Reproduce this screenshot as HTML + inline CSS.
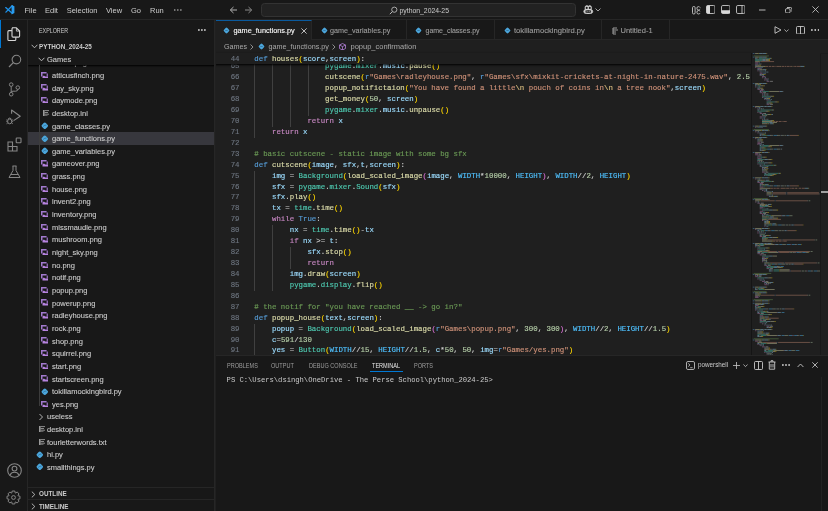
<!DOCTYPE html>
<html><head><meta charset="utf-8">
<style>
*{box-sizing:border-box;margin:0;padding:0}
html,body{width:828px;height:511px;overflow:hidden;background:#181818;font-family:"Liberation Sans",sans-serif;color:#cccccc}
.abs{position:absolute}
/* title bar */
#title{position:absolute;left:0;top:0;width:828px;height:19.5px;background:#181818;border-bottom:1px solid #262626}
.menu{position:absolute;top:5.7px;font-size:7.5px;line-height:9px;color:#cccccc;white-space:nowrap}
#cmd{position:absolute;left:260.5px;top:3px;width:315px;height:14px;background:#222222;border:1px solid #333333;border-radius:3.5px}
/* activity bar */
#act{position:absolute;left:0;top:19.5px;width:27.5px;height:492px;background:#181818;border-right:1px solid #262626}
#act svg{position:absolute}
/* sidebar */
#side{position:absolute;left:27.5px;top:19.5px;width:187px;height:492px;background:#181818;border-right:1px solid #262626;overflow:hidden}
.row{position:absolute;left:0;-webkit-text-stroke:0.1px currentColor;width:187px;height:12.65px;font-size:7.5px;line-height:12.65px;color:#cccccc;white-space:nowrap}
.row.sel{background:#37373d}
.row .ico{position:absolute;top:0;height:12.65px;display:flex;align-items:center}
.row .rt{position:absolute;top:1.3px}
/* editor */
#editor{position:absolute;left:215px;top:19.5px;width:613px;height:336px;background:#1f1f1f;overflow:hidden}
#tabs{position:absolute;left:0;top:0;width:613px;height:20px;background:#181818;border-bottom:1px solid #262626}
.tab{position:absolute;-webkit-text-stroke:0.1px currentColor;top:0;height:19px;border-right:1px solid #262626;font-size:7.5px;line-height:20px;color:#9d9d9d;white-space:nowrap;background:#181818}
.tab.active{background:#1f1f1f;color:#ffffff;border-top:1px solid #0a5a9e;border-bottom:none;height:20.5px}
.tab svg{position:absolute}
.tab.in > span{top:1px !important}
.tab.in > svg{margin-top:1px}
.ln{position:absolute;left:0;-webkit-text-stroke:0.12px currentColor;width:24.5px;text-align:right;font-family:"Liberation Mono",monospace;font-size:7.39px;line-height:10.925px;height:10.925px;color:#6e7681;white-space:pre}
.cl{position:absolute;left:39.3px;-webkit-text-stroke:0.15px currentColor;font-family:"Liberation Mono",monospace;font-size:7.39px;line-height:10.925px;height:10.925px;white-space:pre;color:#cccccc}
.ig{position:absolute;width:1px;background:#404040}
/* panel */
#panel{position:absolute;left:215px;top:354.7px;width:613px;height:156px;background:#181818;border-top:1px solid #262626}
.ptab{position:absolute;top:6.4px;font-size:6.4px;line-height:8px;color:#9d9d9d;white-space:nowrap;transform:scaleX(0.87);transform-origin:0 0}
</style></head>
<body><div id="wrap" style="position:absolute;left:0;top:0;width:828px;height:511px;will-change:transform;overflow:hidden">
<div id="title">
  <svg class="abs" style="left:0;top:0" width="20" height="19" viewBox="0 0 20 19"><path d="M5.7 7.6 L12.2 13.2 M5.9 12.1 L12.2 5.7" stroke="#1e92ea" stroke-width="1.35" stroke-linecap="round"/><path d="M11.6 5 L14.4 6.3 V13.1 L11.6 14.4 Z" fill="#2a9df0"/></svg>
  <span class="menu" style="left:24.5px">File</span>
  <span class="menu" style="left:45px">Edit</span>
  <span class="menu" style="left:66.7px">Selection</span>
  <span class="menu" style="left:106px">View</span>
  <span class="menu" style="left:131px">Go</span>
  <span class="menu" style="left:150px">Run</span>

  <svg class="abs" style="left:228.5px;top:6px" width="9" height="8" viewBox="0 0 9 8"><path d="M8 4 H1.5 M4.5 1 L1.3 4 L4.5 7" stroke="#b0b0b0" stroke-width="1" fill="none"/></svg>
  <svg class="abs" style="left:243.5px;top:6px" width="9" height="8" viewBox="0 0 9 8"><path d="M1 4 H7.5 M4.5 1 L7.7 4 L4.5 7" stroke="#8a8a8a" stroke-width="1" fill="none"/></svg>
  <div id="cmd"></div>
  <svg class="abs" style="left:388.5px;top:5.5px" width="9" height="9" viewBox="0 0 9 9"><circle cx="5.3" cy="3.7" r="2.6" stroke="#b8b8b8" stroke-width="0.9" fill="none"/><path d="M3.4 5.6 L0.8 8.2" stroke="#b8b8b8" stroke-width="1"/></svg>
  <span class="menu" style="left:399.5px;top:5.6px;font-size:6.85px">python_2024-25</span>
  <svg class="abs" style="left:583px;top:4.5px" width="10.5" height="9.6" viewBox="0 0 10.5 9.6"><path d="M2 2.2 Q2.3 0.6 3.8 0.6 Q5 0.6 5.25 1.6 Q5.5 0.6 6.7 0.6 Q8.2 0.6 8.5 2.2 Q8.6 3.6 8.3 4.4 Q9.8 5 9.8 6.6 Q9.8 9 5.25 9 Q0.7 9 0.7 6.6 Q0.7 5 2.2 4.4 Q1.9 3.6 2 2.2 Z" fill="#d0d0d0" stroke="#d8d8d8" stroke-width="0.6"/><circle cx="3.7" cy="2.9" r="1.05" fill="#181818"/><circle cx="6.8" cy="2.9" r="1.05" fill="#181818"/><path d="M2.4 5.6 Q5.25 4.4 8.1 5.6 V7.4 Q5.25 8.4 2.4 7.4 Z" fill="#3a3a3a"/><path d="M4.2 6 V7.2 M6.3 6 V7.2" stroke="#9a9a9a" stroke-width="0.7"/></svg>
  <svg class="abs" style="left:595px;top:8px" width="6" height="4" viewBox="0 0 6 4"><path d="M0.5 0.5 L3 3 L5.5 0.5" stroke="#b0b0b0" stroke-width="0.9" fill="none"/></svg>
  <!-- layout icons -->
  <svg class="abs" style="left:691.5px;top:5.5px" width="9" height="9" viewBox="0 0 9 9"><rect x="0.5" y="0.5" width="2.6" height="7.5" rx="1.2" fill="none" stroke="#c8c8c8" stroke-width="0.9"/><path d="M8.2 1.6 Q7.6 0.6 6.4 0.6 Q4.9 0.6 4.9 2.3 Q4.9 4 6.4 4 Q7.6 4 8.2 3.1 M8.2 5.4 Q7.6 4.5 6.4 4.5 Q4.9 4.5 4.9 6.3 Q4.9 8 6.4 8 Q7.6 8 8.2 7" fill="none" stroke="#c8c8c8" stroke-width="0.9"/></svg>
  <svg class="abs" style="left:705.5px;top:5.3px" width="9.5" height="9" viewBox="0 0 9.5 9"><rect x="0.5" y="0.5" width="8.5" height="8" rx="1.3" fill="none" stroke="#c8c8c8" stroke-width="0.9"/><path d="M0.5 1.8 Q0.5 0.5 1.8 0.5 H4 V8.5 H1.8 Q0.5 8.5 0.5 7.2 Z" fill="#d8d8d8"/></svg>
  <svg class="abs" style="left:720.5px;top:5.3px" width="9.5" height="9" viewBox="0 0 9.5 9"><rect x="0.5" y="0.5" width="8.5" height="8" rx="1.3" fill="none" stroke="#c8c8c8" stroke-width="0.9"/><path d="M0.5 5.2 H9 V7.2 Q9 8.5 7.7 8.5 H1.8 Q0.5 8.5 0.5 7.2 Z" fill="#d8d8d8"/></svg>
  <svg class="abs" style="left:735.5px;top:5.3px" width="9.5" height="9" viewBox="0 0 9.5 9"><rect x="0.5" y="0.5" width="8.5" height="8" rx="1.3" fill="none" stroke="#c8c8c8" stroke-width="0.9"/><path d="M6 0.5 V8.5" stroke="#c8c8c8" stroke-width="0.9"/></svg>
  <svg class="abs" style="left:759px;top:9px" width="7" height="2" viewBox="0 0 7 2"><path d="M0 1 H6.5" stroke="#c8c8c8" stroke-width="0.9"/></svg>
  <svg class="abs" style="left:784.7px;top:6.7px" width="7.5" height="6.5" viewBox="0 0 7.5 6.5"><rect x="0.5" y="1.6" width="4.6" height="4.4" rx="1.3" fill="none" stroke="#c8c8c8" stroke-width="0.9"/><path d="M2 0.5 H5.4 Q7 0.5 7 2.1 V4.8" stroke="#c8c8c8" stroke-width="0.9" fill="none"/></svg>
  <svg class="abs" style="left:811.5px;top:6.4px" width="7" height="7" viewBox="0 0 7 7"><path d="M0.4 0.4 L6.6 6.6 M6.6 0.4 L0.4 6.6" stroke="#c8c8c8" stroke-width="0.85"/></svg>
</div>

<div id="act">
  <div class="abs" style="left:0;top:0.6px;width:1.2px;height:27.6px;background:#0078d4"></div>
  <!-- explorer -->
  <svg style="left:7px;top:7.5px" width="14" height="15" viewBox="0 0 14 15"><path d="M5 0.8 H9.3 L12.6 4 V9 Q12.6 10.1 11.5 10.1 H6.1 Q5 10.1 5 9 V1.9 Q5 0.8 6.1 0.8 Z" fill="none" stroke="#d7d7d7" stroke-width="1.1"/><path d="M9.4 1 V4.1 H12.4" fill="none" stroke="#d7d7d7" stroke-width="0.8"/><path d="M4.9 3.6 H2 Q0.9 3.6 0.9 4.7 V12.4 Q0.9 13.5 2 13.5 H7.7 Q8.8 13.5 8.8 12.4 V10.2" fill="none" stroke="#d7d7d7" stroke-width="1.1"/></svg>
  <!-- search -->
  <svg style="left:7.5px;top:34.5px" width="14" height="14" viewBox="0 0 14 14"><circle cx="8.4" cy="5.6" r="4.3" fill="none" stroke="#868686" stroke-width="1.1"/><path d="M5.3 8.7 L1 13" stroke="#868686" stroke-width="1.2"/></svg>
  <!-- source control -->
  <svg style="left:7.5px;top:62px" width="13" height="15" viewBox="0 0 13 15"><circle cx="3.2" cy="2.6" r="1.8" fill="none" stroke="#868686" stroke-width="1"/><circle cx="3.2" cy="12.2" r="1.8" fill="none" stroke="#868686" stroke-width="1"/><circle cx="9.8" cy="5.6" r="1.8" fill="none" stroke="#868686" stroke-width="1"/><path d="M3.2 4.4 V10.4 M9.8 7.4 Q9.8 9.2 7.5 9.2 H5 Q3.2 9.2 3.2 10.4" fill="none" stroke="#868686" stroke-width="1"/></svg>
  <!-- run debug -->
  <svg style="left:6px;top:89.5px" width="15" height="16" viewBox="0 0 15 16"><path d="M5.6 4.8 V1 L14.2 7.3 L7.6 11.6" fill="none" stroke="#868686" stroke-width="1.1" stroke-linejoin="round"/><path d="M2.1 9.8 Q3.7 8.2 5.3 9.8" fill="none" stroke="#868686" stroke-width="0.9"/><rect x="1.7" y="10" width="4" height="4.8" rx="2" fill="none" stroke="#868686" stroke-width="1"/><path d="M0.2 11 H1.7 M0.2 12.6 H1.7 M0.5 14.8 L1.9 13.9 M5.7 11 H7.2 M5.7 12.6 H7.2 M6.9 14.8 L5.5 13.9" stroke="#868686" stroke-width="0.8"/></svg>
  <!-- extensions -->
  <svg style="left:6.5px;top:117px" width="15" height="15" viewBox="0 0 15 15"><path d="M1 5 H5.5 V9.5 H10 V14 H1 Z M1 9.5 H5.5 V14" fill="none" stroke="#868686" stroke-width="1.1"/><rect x="9.2" y="1" width="4.8" height="4.8" rx="0.7" fill="none" stroke="#868686" stroke-width="1.1"/></svg>
  <!-- testing -->
  <svg style="left:7.5px;top:145.5px" width="13" height="14" viewBox="0 0 13 14"><path d="M4.5 1 H8.5 M5 1 V5.5 L1 12.5 H12 L8 5.5 V1 M2.8 9.5 H10.2" fill="none" stroke="#868686" stroke-width="1"/></svg>
  <!-- accounts -->
  <svg style="left:6.5px;top:443.5px" width="15" height="15" viewBox="0 0 15 15"><circle cx="7.5" cy="7.5" r="6.8" fill="none" stroke="#868686" stroke-width="1.1"/><circle cx="7.5" cy="5.6" r="2.4" fill="none" stroke="#868686" stroke-width="1.1"/><path d="M3.2 12.2 Q4 9.3 7.5 9.3 Q11 9.3 11.8 12.2" fill="none" stroke="#868686" stroke-width="1.1"/></svg>
  <!-- manage -->
  <svg style="left:6.3px;top:470.7px" width="15" height="15" viewBox="0 0 15 15"><path d="M12.09 5.77 L13.97 6.19 L13.97 8.81 L12.09 9.23 L11.96 9.52 L13.00 11.15 L11.15 13.00 L9.52 11.96 L9.23 12.09 L8.81 13.97 L6.19 13.97 L5.77 12.09 L5.48 11.96 L3.85 13.00 L2.00 11.15 L3.04 9.52 L2.91 9.23 L1.03 8.81 L1.03 6.19 L2.91 5.77 L3.04 5.48 L2.00 3.85 L3.85 2.00 L5.48 3.04 L5.77 2.91 L6.19 1.03 L8.81 1.03 L9.23 2.91 L9.52 3.04 L11.15 2.00 L13.00 3.85 L11.96 5.48 Z" fill="none" stroke="#868686" stroke-width="1" stroke-linejoin="round"/><circle cx="7.5" cy="7.5" r="1.9" fill="none" stroke="#868686" stroke-width="1"/></svg>
</div>

<div id="side">
  <span class="abs" style="left:11.5px;top:7.5px;font-size:6.3px;line-height:7px;color:#cccccc;transform:scaleX(0.85);transform-origin:0 0">EXPLORER</span>

  <div class="abs" style="left:0;top:33.3px;width:187px;height:433px;overflow:hidden">
    <div class="row" style="top:3.200px"><span class="rt" style="left:24.5px">avatar.png</span></div><div class="row" style="top:15.850px"><span class="ico" style="left:13.6px"><svg width="7.2" height="6.4" viewBox="0 0 7.2 6.4"><path d="M0 0 H5.6 V1.5 H1.5 V4.6 H0 Z" fill="#a27ace"/><path d="M5.6 1.5 H7.2 V4.6 H5.6 Z" fill="#8a64b0"/><path d="M1.5 6.4 V4.6 L2.9 3.6 L4.3 4.6 H7.2 V6.4 Z" fill="#b783e0"/></svg></span><span class="rt" style="left:24.5px">atticusfinch.png</span></div><div class="row" style="top:28.500px"><span class="ico" style="left:13.6px"><svg width="7.2" height="6.4" viewBox="0 0 7.2 6.4"><path d="M0 0 H5.6 V1.5 H1.5 V4.6 H0 Z" fill="#a27ace"/><path d="M5.6 1.5 H7.2 V4.6 H5.6 Z" fill="#8a64b0"/><path d="M1.5 6.4 V4.6 L2.9 3.6 L4.3 4.6 H7.2 V6.4 Z" fill="#b783e0"/></svg></span><span class="rt" style="left:24.5px">day_sky.png</span></div><div class="row" style="top:41.150px"><span class="ico" style="left:13.6px"><svg width="7.2" height="6.4" viewBox="0 0 7.2 6.4"><path d="M0 0 H5.6 V1.5 H1.5 V4.6 H0 Z" fill="#a27ace"/><path d="M5.6 1.5 H7.2 V4.6 H5.6 Z" fill="#8a64b0"/><path d="M1.5 6.4 V4.6 L2.9 3.6 L4.3 4.6 H7.2 V6.4 Z" fill="#b783e0"/></svg></span><span class="rt" style="left:24.5px">daymode.png</span></div><div class="row" style="top:53.800px"><span class="ico" style="left:15.3px"><svg width="6" height="6.5" viewBox="0 0 6 6.5"><rect x="0" y="0" width="1.6" height="6.5" fill="#9a9a9a"/><path d="M1.5 0.6 h4.5 M1.5 2.5 h3.5 M1.5 4.2 h4.5 M1.5 5.9 h3" stroke="#9a9a9a" stroke-width="0.9"/></svg></span><span class="rt" style="left:24.5px">desktop.ini</span></div><div class="row" style="top:66.450px"><span class="ico" style="left:13.5px"><svg width="7.6" height="7.6" viewBox="0 0 7.6 7.6" style="margin-top:0.3px"><rect x="1.1" y="1.1" width="5.4" height="5.4" rx="1.6" transform="rotate(45 3.8 3.8)" fill="#4ba6dc"/><path d="M2.1 4.5 Q3.8 2.8 5.5 3.1" stroke="#2b5f82" stroke-width="0.6" fill="none"/></svg></span><span class="rt" style="left:24.5px">game_classes.py</span></div><div class="row sel" style="top:79.100px"><span class="ico" style="left:13.5px"><svg width="7.6" height="7.6" viewBox="0 0 7.6 7.6" style="margin-top:0.3px"><rect x="1.1" y="1.1" width="5.4" height="5.4" rx="1.6" transform="rotate(45 3.8 3.8)" fill="#4ba6dc"/><path d="M2.1 4.5 Q3.8 2.8 5.5 3.1" stroke="#2b5f82" stroke-width="0.6" fill="none"/></svg></span><span class="rt" style="left:24.5px">game_functions.py</span></div><div class="row" style="top:91.750px"><span class="ico" style="left:13.5px"><svg width="7.6" height="7.6" viewBox="0 0 7.6 7.6" style="margin-top:0.3px"><rect x="1.1" y="1.1" width="5.4" height="5.4" rx="1.6" transform="rotate(45 3.8 3.8)" fill="#4ba6dc"/><path d="M2.1 4.5 Q3.8 2.8 5.5 3.1" stroke="#2b5f82" stroke-width="0.6" fill="none"/></svg></span><span class="rt" style="left:24.5px">game_variables.py</span></div><div class="row" style="top:104.400px"><span class="ico" style="left:13.6px"><svg width="7.2" height="6.4" viewBox="0 0 7.2 6.4"><path d="M0 0 H5.6 V1.5 H1.5 V4.6 H0 Z" fill="#a27ace"/><path d="M5.6 1.5 H7.2 V4.6 H5.6 Z" fill="#8a64b0"/><path d="M1.5 6.4 V4.6 L2.9 3.6 L4.3 4.6 H7.2 V6.4 Z" fill="#b783e0"/></svg></span><span class="rt" style="left:24.5px">gameover.png</span></div><div class="row" style="top:117.050px"><span class="ico" style="left:13.6px"><svg width="7.2" height="6.4" viewBox="0 0 7.2 6.4"><path d="M0 0 H5.6 V1.5 H1.5 V4.6 H0 Z" fill="#a27ace"/><path d="M5.6 1.5 H7.2 V4.6 H5.6 Z" fill="#8a64b0"/><path d="M1.5 6.4 V4.6 L2.9 3.6 L4.3 4.6 H7.2 V6.4 Z" fill="#b783e0"/></svg></span><span class="rt" style="left:24.5px">grass.png</span></div><div class="row" style="top:129.700px"><span class="ico" style="left:13.6px"><svg width="7.2" height="6.4" viewBox="0 0 7.2 6.4"><path d="M0 0 H5.6 V1.5 H1.5 V4.6 H0 Z" fill="#a27ace"/><path d="M5.6 1.5 H7.2 V4.6 H5.6 Z" fill="#8a64b0"/><path d="M1.5 6.4 V4.6 L2.9 3.6 L4.3 4.6 H7.2 V6.4 Z" fill="#b783e0"/></svg></span><span class="rt" style="left:24.5px">house.png</span></div><div class="row" style="top:142.350px"><span class="ico" style="left:13.6px"><svg width="7.2" height="6.4" viewBox="0 0 7.2 6.4"><path d="M0 0 H5.6 V1.5 H1.5 V4.6 H0 Z" fill="#a27ace"/><path d="M5.6 1.5 H7.2 V4.6 H5.6 Z" fill="#8a64b0"/><path d="M1.5 6.4 V4.6 L2.9 3.6 L4.3 4.6 H7.2 V6.4 Z" fill="#b783e0"/></svg></span><span class="rt" style="left:24.5px">invent2.png</span></div><div class="row" style="top:155.000px"><span class="ico" style="left:13.6px"><svg width="7.2" height="6.4" viewBox="0 0 7.2 6.4"><path d="M0 0 H5.6 V1.5 H1.5 V4.6 H0 Z" fill="#a27ace"/><path d="M5.6 1.5 H7.2 V4.6 H5.6 Z" fill="#8a64b0"/><path d="M1.5 6.4 V4.6 L2.9 3.6 L4.3 4.6 H7.2 V6.4 Z" fill="#b783e0"/></svg></span><span class="rt" style="left:24.5px">inventory.png</span></div><div class="row" style="top:167.650px"><span class="ico" style="left:13.6px"><svg width="7.2" height="6.4" viewBox="0 0 7.2 6.4"><path d="M0 0 H5.6 V1.5 H1.5 V4.6 H0 Z" fill="#a27ace"/><path d="M5.6 1.5 H7.2 V4.6 H5.6 Z" fill="#8a64b0"/><path d="M1.5 6.4 V4.6 L2.9 3.6 L4.3 4.6 H7.2 V6.4 Z" fill="#b783e0"/></svg></span><span class="rt" style="left:24.5px">missmaudie.png</span></div><div class="row" style="top:180.300px"><span class="ico" style="left:13.6px"><svg width="7.2" height="6.4" viewBox="0 0 7.2 6.4"><path d="M0 0 H5.6 V1.5 H1.5 V4.6 H0 Z" fill="#a27ace"/><path d="M5.6 1.5 H7.2 V4.6 H5.6 Z" fill="#8a64b0"/><path d="M1.5 6.4 V4.6 L2.9 3.6 L4.3 4.6 H7.2 V6.4 Z" fill="#b783e0"/></svg></span><span class="rt" style="left:24.5px">mushroom.png</span></div><div class="row" style="top:192.950px"><span class="ico" style="left:13.6px"><svg width="7.2" height="6.4" viewBox="0 0 7.2 6.4"><path d="M0 0 H5.6 V1.5 H1.5 V4.6 H0 Z" fill="#a27ace"/><path d="M5.6 1.5 H7.2 V4.6 H5.6 Z" fill="#8a64b0"/><path d="M1.5 6.4 V4.6 L2.9 3.6 L4.3 4.6 H7.2 V6.4 Z" fill="#b783e0"/></svg></span><span class="rt" style="left:24.5px">night_sky.png</span></div><div class="row" style="top:205.600px"><span class="ico" style="left:13.6px"><svg width="7.2" height="6.4" viewBox="0 0 7.2 6.4"><path d="M0 0 H5.6 V1.5 H1.5 V4.6 H0 Z" fill="#a27ace"/><path d="M5.6 1.5 H7.2 V4.6 H5.6 Z" fill="#8a64b0"/><path d="M1.5 6.4 V4.6 L2.9 3.6 L4.3 4.6 H7.2 V6.4 Z" fill="#b783e0"/></svg></span><span class="rt" style="left:24.5px">no.png</span></div><div class="row" style="top:218.250px"><span class="ico" style="left:13.6px"><svg width="7.2" height="6.4" viewBox="0 0 7.2 6.4"><path d="M0 0 H5.6 V1.5 H1.5 V4.6 H0 Z" fill="#a27ace"/><path d="M5.6 1.5 H7.2 V4.6 H5.6 Z" fill="#8a64b0"/><path d="M1.5 6.4 V4.6 L2.9 3.6 L4.3 4.6 H7.2 V6.4 Z" fill="#b783e0"/></svg></span><span class="rt" style="left:24.5px">notif.png</span></div><div class="row" style="top:230.900px"><span class="ico" style="left:13.6px"><svg width="7.2" height="6.4" viewBox="0 0 7.2 6.4"><path d="M0 0 H5.6 V1.5 H1.5 V4.6 H0 Z" fill="#a27ace"/><path d="M5.6 1.5 H7.2 V4.6 H5.6 Z" fill="#8a64b0"/><path d="M1.5 6.4 V4.6 L2.9 3.6 L4.3 4.6 H7.2 V6.4 Z" fill="#b783e0"/></svg></span><span class="rt" style="left:24.5px">popup.png</span></div><div class="row" style="top:243.550px"><span class="ico" style="left:13.6px"><svg width="7.2" height="6.4" viewBox="0 0 7.2 6.4"><path d="M0 0 H5.6 V1.5 H1.5 V4.6 H0 Z" fill="#a27ace"/><path d="M5.6 1.5 H7.2 V4.6 H5.6 Z" fill="#8a64b0"/><path d="M1.5 6.4 V4.6 L2.9 3.6 L4.3 4.6 H7.2 V6.4 Z" fill="#b783e0"/></svg></span><span class="rt" style="left:24.5px">powerup.png</span></div><div class="row" style="top:256.200px"><span class="ico" style="left:13.6px"><svg width="7.2" height="6.4" viewBox="0 0 7.2 6.4"><path d="M0 0 H5.6 V1.5 H1.5 V4.6 H0 Z" fill="#a27ace"/><path d="M5.6 1.5 H7.2 V4.6 H5.6 Z" fill="#8a64b0"/><path d="M1.5 6.4 V4.6 L2.9 3.6 L4.3 4.6 H7.2 V6.4 Z" fill="#b783e0"/></svg></span><span class="rt" style="left:24.5px">radleyhouse.png</span></div><div class="row" style="top:268.850px"><span class="ico" style="left:13.6px"><svg width="7.2" height="6.4" viewBox="0 0 7.2 6.4"><path d="M0 0 H5.6 V1.5 H1.5 V4.6 H0 Z" fill="#a27ace"/><path d="M5.6 1.5 H7.2 V4.6 H5.6 Z" fill="#8a64b0"/><path d="M1.5 6.4 V4.6 L2.9 3.6 L4.3 4.6 H7.2 V6.4 Z" fill="#b783e0"/></svg></span><span class="rt" style="left:24.5px">rock.png</span></div><div class="row" style="top:281.500px"><span class="ico" style="left:13.6px"><svg width="7.2" height="6.4" viewBox="0 0 7.2 6.4"><path d="M0 0 H5.6 V1.5 H1.5 V4.6 H0 Z" fill="#a27ace"/><path d="M5.6 1.5 H7.2 V4.6 H5.6 Z" fill="#8a64b0"/><path d="M1.5 6.4 V4.6 L2.9 3.6 L4.3 4.6 H7.2 V6.4 Z" fill="#b783e0"/></svg></span><span class="rt" style="left:24.5px">shop.png</span></div><div class="row" style="top:294.150px"><span class="ico" style="left:13.6px"><svg width="7.2" height="6.4" viewBox="0 0 7.2 6.4"><path d="M0 0 H5.6 V1.5 H1.5 V4.6 H0 Z" fill="#a27ace"/><path d="M5.6 1.5 H7.2 V4.6 H5.6 Z" fill="#8a64b0"/><path d="M1.5 6.4 V4.6 L2.9 3.6 L4.3 4.6 H7.2 V6.4 Z" fill="#b783e0"/></svg></span><span class="rt" style="left:24.5px">squirrel.png</span></div><div class="row" style="top:306.800px"><span class="ico" style="left:13.6px"><svg width="7.2" height="6.4" viewBox="0 0 7.2 6.4"><path d="M0 0 H5.6 V1.5 H1.5 V4.6 H0 Z" fill="#a27ace"/><path d="M5.6 1.5 H7.2 V4.6 H5.6 Z" fill="#8a64b0"/><path d="M1.5 6.4 V4.6 L2.9 3.6 L4.3 4.6 H7.2 V6.4 Z" fill="#b783e0"/></svg></span><span class="rt" style="left:24.5px">start.png</span></div><div class="row" style="top:319.450px"><span class="ico" style="left:13.6px"><svg width="7.2" height="6.4" viewBox="0 0 7.2 6.4"><path d="M0 0 H5.6 V1.5 H1.5 V4.6 H0 Z" fill="#a27ace"/><path d="M5.6 1.5 H7.2 V4.6 H5.6 Z" fill="#8a64b0"/><path d="M1.5 6.4 V4.6 L2.9 3.6 L4.3 4.6 H7.2 V6.4 Z" fill="#b783e0"/></svg></span><span class="rt" style="left:24.5px">startscreen.png</span></div><div class="row" style="top:332.100px"><span class="ico" style="left:13.5px"><svg width="7.6" height="7.6" viewBox="0 0 7.6 7.6" style="margin-top:0.3px"><rect x="1.1" y="1.1" width="5.4" height="5.4" rx="1.6" transform="rotate(45 3.8 3.8)" fill="#4ba6dc"/><path d="M2.1 4.5 Q3.8 2.8 5.5 3.1" stroke="#2b5f82" stroke-width="0.6" fill="none"/></svg></span><span class="rt" style="left:24.5px">tokillamockingbird.py</span></div><div class="row" style="top:344.750px"><span class="ico" style="left:13.6px"><svg width="7.2" height="6.4" viewBox="0 0 7.2 6.4"><path d="M0 0 H5.6 V1.5 H1.5 V4.6 H0 Z" fill="#a27ace"/><path d="M5.6 1.5 H7.2 V4.6 H5.6 Z" fill="#8a64b0"/><path d="M1.5 6.4 V4.6 L2.9 3.6 L4.3 4.6 H7.2 V6.4 Z" fill="#b783e0"/></svg></span><span class="rt" style="left:24.5px">yes.png</span></div><div class="row" style="top:357.400px"><span class="ico" style="left:10.5px"><svg width="6" height="8" viewBox="0 0 6 8"><path d="M1.5 1 L4.5 4 L1.5 7" stroke="#c5c5c5" stroke-width="0.9" fill="none"/></svg></span><span class="rt" style="left:19.5px">useless</span></div><div class="row" style="top:370.050px"><span class="ico" style="left:11.3px"><svg width="6" height="6.5" viewBox="0 0 6 6.5"><rect x="0" y="0" width="1.6" height="6.5" fill="#9a9a9a"/><path d="M1.5 0.6 h4.5 M1.5 2.5 h3.5 M1.5 4.2 h4.5 M1.5 5.9 h3" stroke="#9a9a9a" stroke-width="0.9"/></svg></span><span class="rt" style="left:19.5px">desktop.ini</span></div><div class="row" style="top:382.700px"><span class="ico" style="left:11.3px"><svg width="6" height="6.5" viewBox="0 0 6 6.5"><rect x="0" y="0" width="1.6" height="6.5" fill="#9a9a9a"/><path d="M1.5 0.6 h4.5 M1.5 2.5 h3.5 M1.5 4.2 h4.5 M1.5 5.9 h3" stroke="#9a9a9a" stroke-width="0.9"/></svg></span><span class="rt" style="left:19.5px">fourletterwords.txt</span></div><div class="row" style="top:395.350px"><span class="ico" style="left:8.9px"><svg width="7.6" height="7.6" viewBox="0 0 7.6 7.6" style="margin-top:0.3px"><rect x="1.1" y="1.1" width="5.4" height="5.4" rx="1.6" transform="rotate(45 3.8 3.8)" fill="#4ba6dc"/><path d="M2.1 4.5 Q3.8 2.8 5.5 3.1" stroke="#2b5f82" stroke-width="0.6" fill="none"/></svg></span><span class="rt" style="left:19.5px">hi.py</span></div><div class="row" style="top:408.000px"><span class="ico" style="left:8.9px"><svg width="7.6" height="7.6" viewBox="0 0 7.6 7.6" style="margin-top:0.3px"><rect x="1.1" y="1.1" width="5.4" height="5.4" rx="1.6" transform="rotate(45 3.8 3.8)" fill="#4ba6dc"/><path d="M2.1 4.5 Q3.8 2.8 5.5 3.1" stroke="#2b5f82" stroke-width="0.6" fill="none"/></svg></span><span class="rt" style="left:19.5px">smallthings.py</span></div>
    <!-- sticky Games header -->
    <div class="row" style="top:0;height:12.65px;background:#181818;box-shadow:0 1px 1.5px #000"><span class="ico" style="left:10.5px"><svg width="7" height="5" viewBox="0 0 7 5"><path d="M0.6 0.8 L3.5 3.8 L6.4 0.8" stroke="#c5c5c5" stroke-width="0.9" fill="none"/></svg></span><span class="rt" style="left:19.5px">Games</span></div>
    <div class="abs" style="left:11.5px;top:12.65px;width:0.8px;height:341px;background:#3c3c3c"></div>
  </div>
  <div class="abs" style="left:0;top:20.6px;width:187px;height:12.65px;background:#181818">
    <svg class="abs" style="left:3.5px;top:4px" width="7" height="5" viewBox="0 0 7 5"><path d="M0.6 0.8 L3.5 3.8 L6.4 0.8" stroke="#c5c5c5" stroke-width="0.9" fill="none"/></svg>
    <span class="abs" style="left:11.5px;top:2.5px;font-size:6.3px;line-height:8px;font-weight:bold;color:#cccccc">PYTHON_2024-25</span>
  </div>
  <!-- outline / timeline -->
  <div class="abs" style="left:0;top:467.4px;width:187px;height:12.5px;background:#181818;border-top:1px solid #262626">
    <svg class="abs" style="left:3.8px;top:3px" width="5" height="7" viewBox="0 0 5 7"><path d="M0.8 0.6 L3.8 3.5 L0.8 6.4" stroke="#c5c5c5" stroke-width="0.9" fill="none"/></svg>
    <span class="abs" style="left:11.5px;top:2.5px;font-size:6.3px;line-height:8px;font-weight:bold;color:#cccccc">OUTLINE</span>
  </div>
  <div class="abs" style="left:0;top:479.9px;width:187px;height:13px;background:#181818;border-top:1px solid #262626">
    <svg class="abs" style="left:3.8px;top:3px" width="5" height="7" viewBox="0 0 5 7"><path d="M0.8 0.6 L3.8 3.5 L0.8 6.4" stroke="#c5c5c5" stroke-width="0.9" fill="none"/></svg>
    <span class="abs" style="left:11.5px;top:2.5px;font-size:6.3px;line-height:8px;font-weight:bold;color:#cccccc">TIMELINE</span>
  </div>
</div>

<div id="editor">
  <div id="tabs">
    <div class="tab active" style="left:0;width:97px"><svg style="left:8.3px;top:6.5px" width="7" height="7" viewBox="0 0 8 8"><rect x="1.3" y="1.3" width="5.4" height="5.4" rx="1.4" transform="rotate(45 4 4)" fill="#4ba6dc"/><path d="M2.6 4 h2.8" stroke="#2a5d80" stroke-width="0.7"/></svg><span class="abs" style="left:18.5px;top:0;font-size:7.3px">game_functions.py</span><svg style="left:85.5px;top:7px" width="6" height="6" viewBox="0 0 6 6"><path d="M0.4 0.4 L5.6 5.6 M5.6 0.4 L0.4 5.6" stroke="#d0d0d0" stroke-width="0.9"/></svg></div>
    <div class="tab in" style="left:97px;width:94.5px"><svg style="left:8.5px;top:6.5px" width="7" height="7" viewBox="0 0 8 8"><rect x="1.3" y="1.3" width="5.4" height="5.4" rx="1.4" transform="rotate(45 4 4)" fill="#4ba6dc"/><path d="M2.6 4 h2.8" stroke="#2a5d80" stroke-width="0.7"/></svg><span class="abs" style="left:18px;top:0;font-size:7.2px">game_variables.py</span></div>
    <div class="tab in" style="left:191.5px;width:88px"><svg style="left:8.5px;top:6.5px" width="7" height="7" viewBox="0 0 8 8"><rect x="1.3" y="1.3" width="5.4" height="5.4" rx="1.4" transform="rotate(45 4 4)" fill="#4ba6dc"/><path d="M2.6 4 h2.8" stroke="#2a5d80" stroke-width="0.7"/></svg><span class="abs" style="left:19px;top:0;font-size:7.0px">game_classes.py</span></div>
    <div class="tab in" style="left:279.5px;width:107px"><svg style="left:9px;top:6.5px" width="7" height="7" viewBox="0 0 8 8"><rect x="1.3" y="1.3" width="5.4" height="5.4" rx="1.4" transform="rotate(45 4 4)" fill="#4ba6dc"/><path d="M2.6 4 h2.8" stroke="#2a5d80" stroke-width="0.7"/></svg><span class="abs" style="left:19.5px;top:0;font-size:7.65px">tokillamockingbird.py</span></div>
    <div class="tab in" style="left:386.5px;width:68.5px"><svg style="left:10px;top:6.5px" width="7" height="8" viewBox="0 0 7 8"><path d="M1 1 h4 M1 3 h5 M1 5 h3 M1 7 h3 M1 1 v6" stroke="#9a9a9a" stroke-width="1.1" fill="none"/></svg><span class="abs" style="left:19px;top:0">Untitled-1</span></div>
    <svg class="abs" style="left:559px;top:6.6px" width="8" height="8" viewBox="0 0 8 8"><path d="M1 0.7 L7 4 L1 7.3 Z" fill="none" stroke="#c8c8c8" stroke-width="0.9"/></svg>
    <svg class="abs" style="left:569.2px;top:9px" width="5" height="4" viewBox="0 0 5 4"><path d="M0.4 0.5 L2.5 2.6 L4.6 0.5" stroke="#c8c8c8" stroke-width="0.8" fill="none"/></svg>
    <svg class="abs" style="left:581px;top:6px" width="9" height="8.5" viewBox="0 0 9 8.5"><rect x="0.5" y="0.5" width="8" height="7.5" rx="1" fill="none" stroke="#c8c8c8" stroke-width="0.9"/><path d="M4.5 0.5 V8.5" stroke="#c8c8c8" stroke-width="0.9"/></svg>

  </div>
  <!-- breadcrumbs -->
  <div class="abs" style="left:0;top:20px;width:613px;height:13px;background:#1f1f1f;font-size:7.2px;line-height:13px;color:#a9a9a9;white-space:nowrap">
    <span class="abs" style="left:9px">Games</span>
    <svg class="abs" style="left:35px;top:4px" width="4" height="6" viewBox="0 0 4 6"><path d="M0.5 0.5 L3 3 L0.5 5.5" stroke="#a9a9a9" stroke-width="0.8" fill="none"/></svg>
    <svg class="abs" style="left:43px;top:3px" width="7" height="7" viewBox="0 0 8 8"><rect x="1.3" y="1.3" width="5.4" height="5.4" rx="1.4" transform="rotate(45 4 4)" fill="#4ba6dc"/><path d="M2.6 4 h2.8" stroke="#2a5d80" stroke-width="0.7"/></svg>
    <span class="abs" style="left:53.5px">game_functions.py</span>
    <svg class="abs" style="left:116.5px;top:4px" width="4" height="6" viewBox="0 0 4 6"><path d="M0.5 0.5 L3 3 L0.5 5.5" stroke="#a9a9a9" stroke-width="0.8" fill="none"/></svg>
    <svg class="abs" style="left:123.5px;top:3px" width="7" height="7.5" viewBox="0 0 7 7.5"><path d="M3.5 0.5 L6.5 2 V5.5 L3.5 7 L0.5 5.5 V2 Z M0.5 2 L3.5 3.6 L6.5 2 M3.5 3.6 V7" fill="none" stroke="#b180d7" stroke-width="0.8"/></svg>
    <span class="abs" style="left:135.5px;font-size:7.5px">popup_confirmation</span>
  </div>
  <!-- code -->
  <div class="abs" style="left:0;top:32.5px;width:537px;height:303.5px;overflow:hidden">
    <div class="abs" style="left:0;top:-52px;width:537px;height:400px">
      <div class="ig" style="left:39.30px;top:61.375px;height:76.475px"></div><div class="ig" style="left:57.04px;top:61.375px;height:65.550px"></div><div class="ig" style="left:74.77px;top:61.375px;height:65.550px"></div><div class="ig" style="left:92.51px;top:61.375px;height:54.625px"></div><div class="ig" style="left:39.30px;top:170.625px;height:120.175px"></div><div class="ig" style="left:57.04px;top:225.250px;height:65.550px"></div><div class="ig" style="left:74.77px;top:247.100px;height:21.850px"></div><div class="ig" style="left:39.30px;top:323.575px;height:32.775px"></div>
      <div class="ln" style="top:61.375px">65</div><div class="cl" style="top:61.375px"><span style="color:#cccccc">                </span><span style="color:#4ec9b0">pygame</span><span style="color:#cccccc">.</span><span style="color:#4ec9b0">mixer</span><span style="color:#cccccc">.</span><span style="color:#9cdcfe">music</span><span style="color:#cccccc">.</span><span style="color:#dcdcaa">pause</span><span style="color:#ffd700">()</span></div><div class="ln" style="top:72.300px">66</div><div class="cl" style="top:72.300px"><span style="color:#cccccc">                </span><span style="color:#dcdcaa">cutscene</span><span style="color:#ffd700">(</span><span style="color:#569cd6">r</span><span style="color:#ce9178">&quot;Games\radleyhouse.png&quot;</span><span style="color:#cccccc">, </span><span style="color:#569cd6">r</span><span style="color:#ce9178">&quot;Games\sfx\mixkit-crickets-at-night-in-nature-2475.wav&quot;</span><span style="color:#cccccc">, </span><span style="color:#b5cea8">2.5</span></div><div class="ln" style="top:83.225px">67</div><div class="cl" style="top:83.225px"><span style="color:#cccccc">                </span><span style="color:#dcdcaa">popup_notifictaion</span><span style="color:#ffd700">(</span><span style="color:#ce9178">&quot;You have found a little</span><span style="color:#d7ba7d">\n</span><span style="color:#ce9178"> pouch of coins in</span><span style="color:#d7ba7d">\n</span><span style="color:#ce9178"> a tree nook&quot;</span><span style="color:#cccccc">,</span><span style="color:#9cdcfe">screen</span><span style="color:#ffd700">)</span></div><div class="ln" style="top:94.150px">68</div><div class="cl" style="top:94.150px"><span style="color:#cccccc">                </span><span style="color:#dcdcaa">get_money</span><span style="color:#ffd700">(</span><span style="color:#b5cea8">50</span><span style="color:#cccccc">, </span><span style="color:#9cdcfe">screen</span><span style="color:#ffd700">)</span></div><div class="ln" style="top:105.075px">69</div><div class="cl" style="top:105.075px"><span style="color:#cccccc">                </span><span style="color:#4ec9b0">pygame</span><span style="color:#cccccc">.</span><span style="color:#4ec9b0">mixer</span><span style="color:#cccccc">.</span><span style="color:#9cdcfe">music</span><span style="color:#cccccc">.</span><span style="color:#dcdcaa">unpause</span><span style="color:#ffd700">()</span></div><div class="ln" style="top:116.000px">70</div><div class="cl" style="top:116.000px"><span style="color:#cccccc">            </span><span style="color:#c586c0">return</span><span style="color:#cccccc"> </span><span style="color:#9cdcfe">x</span></div><div class="ln" style="top:126.925px">71</div><div class="cl" style="top:126.925px"><span style="color:#cccccc">    </span><span style="color:#c586c0">return</span><span style="color:#cccccc"> </span><span style="color:#9cdcfe">x</span></div><div class="ln" style="top:137.850px">72</div><div class="cl" style="top:137.850px"></div><div class="ln" style="top:148.775px">73</div><div class="cl" style="top:148.775px"><span style="color:#6a9955"># basic cutscene - static image with some bg sfx</span></div><div class="ln" style="top:159.700px">74</div><div class="cl" style="top:159.700px"><span style="color:#569cd6">def</span><span style="color:#cccccc"> </span><span style="color:#dcdcaa">cutscene</span><span style="color:#ffd700">(</span><span style="color:#9cdcfe">image</span><span style="color:#cccccc">, </span><span style="color:#9cdcfe">sfx</span><span style="color:#cccccc">,</span><span style="color:#9cdcfe">t</span><span style="color:#cccccc">,</span><span style="color:#9cdcfe">screen</span><span style="color:#ffd700">)</span><span style="color:#cccccc">:</span></div><div class="ln" style="top:170.625px">75</div><div class="cl" style="top:170.625px"><span style="color:#cccccc">    </span><span style="color:#9cdcfe">img</span><span style="color:#cccccc"> = </span><span style="color:#4ec9b0">Background</span><span style="color:#ffd700">(</span><span style="color:#dcdcaa">load_scaled_image</span><span style="color:#da70d6">(</span><span style="color:#9cdcfe">image</span><span style="color:#cccccc">, </span><span style="color:#4fc1ff">WIDTH</span><span style="color:#cccccc">*</span><span style="color:#b5cea8">10000</span><span style="color:#cccccc">, </span><span style="color:#4fc1ff">HEIGHT</span><span style="color:#da70d6">)</span><span style="color:#cccccc">, </span><span style="color:#4fc1ff">WIDTH</span><span style="color:#cccccc">//</span><span style="color:#b5cea8">2</span><span style="color:#cccccc">, </span><span style="color:#4fc1ff">HEIGHT</span><span style="color:#ffd700">)</span></div><div class="ln" style="top:181.550px">76</div><div class="cl" style="top:181.550px"><span style="color:#cccccc">    </span><span style="color:#9cdcfe">sfx</span><span style="color:#cccccc"> = </span><span style="color:#4ec9b0">pygame</span><span style="color:#cccccc">.</span><span style="color:#4ec9b0">mixer</span><span style="color:#cccccc">.</span><span style="color:#4ec9b0">Sound</span><span style="color:#ffd700">(</span><span style="color:#9cdcfe">sfx</span><span style="color:#ffd700">)</span></div><div class="ln" style="top:192.475px">77</div><div class="cl" style="top:192.475px"><span style="color:#cccccc">    </span><span style="color:#9cdcfe">sfx</span><span style="color:#cccccc">.</span><span style="color:#dcdcaa">play</span><span style="color:#ffd700">()</span></div><div class="ln" style="top:203.400px">78</div><div class="cl" style="top:203.400px"><span style="color:#cccccc">    </span><span style="color:#9cdcfe">tx</span><span style="color:#cccccc"> = </span><span style="color:#4ec9b0">time</span><span style="color:#cccccc">.</span><span style="color:#dcdcaa">time</span><span style="color:#ffd700">()</span></div><div class="ln" style="top:214.325px">79</div><div class="cl" style="top:214.325px"><span style="color:#cccccc">    </span><span style="color:#c586c0">while</span><span style="color:#cccccc"> </span><span style="color:#569cd6">True</span><span style="color:#cccccc">:</span></div><div class="ln" style="top:225.250px">80</div><div class="cl" style="top:225.250px"><span style="color:#cccccc">        </span><span style="color:#9cdcfe">nx</span><span style="color:#cccccc"> = </span><span style="color:#4ec9b0">time</span><span style="color:#cccccc">.</span><span style="color:#dcdcaa">time</span><span style="color:#ffd700">()</span><span style="color:#cccccc">-</span><span style="color:#9cdcfe">tx</span></div><div class="ln" style="top:236.175px">81</div><div class="cl" style="top:236.175px"><span style="color:#cccccc">        </span><span style="color:#c586c0">if</span><span style="color:#cccccc"> </span><span style="color:#9cdcfe">nx</span><span style="color:#cccccc"> &gt;= </span><span style="color:#9cdcfe">t</span><span style="color:#cccccc">:</span></div><div class="ln" style="top:247.100px">82</div><div class="cl" style="top:247.100px"><span style="color:#cccccc">            </span><span style="color:#9cdcfe">sfx</span><span style="color:#cccccc">.</span><span style="color:#dcdcaa">stop</span><span style="color:#ffd700">()</span></div><div class="ln" style="top:258.025px">83</div><div class="cl" style="top:258.025px"><span style="color:#cccccc">            </span><span style="color:#c586c0">return</span></div><div class="ln" style="top:268.950px">84</div><div class="cl" style="top:268.950px"><span style="color:#cccccc">        </span><span style="color:#9cdcfe">img</span><span style="color:#cccccc">.</span><span style="color:#dcdcaa">draw</span><span style="color:#ffd700">(</span><span style="color:#9cdcfe">screen</span><span style="color:#ffd700">)</span></div><div class="ln" style="top:279.875px">85</div><div class="cl" style="top:279.875px"><span style="color:#cccccc">        </span><span style="color:#4ec9b0">pygame</span><span style="color:#cccccc">.</span><span style="color:#4ec9b0">display</span><span style="color:#cccccc">.</span><span style="color:#dcdcaa">flip</span><span style="color:#ffd700">()</span></div><div class="ln" style="top:290.800px">86</div><div class="cl" style="top:290.800px"></div><div class="ln" style="top:301.725px">87</div><div class="cl" style="top:301.725px"><span style="color:#6a9955"># the notif for &quot;you have reached __ -&gt; go in?&quot;</span></div><div class="ln" style="top:312.650px">88</div><div class="cl" style="top:312.650px"><span style="color:#569cd6">def</span><span style="color:#cccccc"> </span><span style="color:#dcdcaa">popup_house</span><span style="color:#ffd700">(</span><span style="color:#9cdcfe">text</span><span style="color:#cccccc">,</span><span style="color:#9cdcfe">screen</span><span style="color:#ffd700">)</span><span style="color:#cccccc">:</span></div><div class="ln" style="top:323.575px">89</div><div class="cl" style="top:323.575px"><span style="color:#cccccc">    </span><span style="color:#9cdcfe">popup</span><span style="color:#cccccc"> = </span><span style="color:#4ec9b0">Background</span><span style="color:#ffd700">(</span><span style="color:#dcdcaa">load_scaled_image</span><span style="color:#da70d6">(</span><span style="color:#569cd6">r</span><span style="color:#ce9178">&quot;Games\popup.png&quot;</span><span style="color:#cccccc">, </span><span style="color:#b5cea8">300</span><span style="color:#cccccc">, </span><span style="color:#b5cea8">300</span><span style="color:#da70d6">)</span><span style="color:#cccccc">, </span><span style="color:#4fc1ff">WIDTH</span><span style="color:#cccccc">//</span><span style="color:#b5cea8">2</span><span style="color:#cccccc">, </span><span style="color:#4fc1ff">HEIGHT</span><span style="color:#cccccc">//</span><span style="color:#b5cea8">1.5</span><span style="color:#ffd700">)</span></div><div class="ln" style="top:334.500px">90</div><div class="cl" style="top:334.500px"><span style="color:#cccccc">    </span><span style="color:#9cdcfe">c</span><span style="color:#cccccc">=</span><span style="color:#b5cea8">591</span><span style="color:#cccccc">/</span><span style="color:#b5cea8">130</span></div><div class="ln" style="top:345.425px">91</div><div class="cl" style="top:345.425px"><span style="color:#cccccc">    </span><span style="color:#9cdcfe">yes</span><span style="color:#cccccc"> = </span><span style="color:#4ec9b0">Button</span><span style="color:#ffd700">(</span><span style="color:#4fc1ff">WIDTH</span><span style="color:#cccccc">//</span><span style="color:#b5cea8">15</span><span style="color:#cccccc">, </span><span style="color:#4fc1ff">HEIGHT</span><span style="color:#cccccc">//</span><span style="color:#b5cea8">1.5</span><span style="color:#cccccc">, </span><span style="color:#9cdcfe">c</span><span style="color:#cccccc">*</span><span style="color:#b5cea8">50</span><span style="color:#cccccc">, </span><span style="color:#b5cea8">50</span><span style="color:#cccccc">, </span><span style="color:#9cdcfe">img</span><span style="color:#cccccc">=</span><span style="color:#569cd6">r</span><span style="color:#ce9178">&quot;Games/yes.png&quot;</span><span style="color:#ffd700">)</span></div>
    </div>
  </div>
  <!-- sticky scroll -->
  <div class="abs" style="left:0;top:33.5px;width:537px;height:11px;background:#1f1f1f;box-shadow:0 1px 2px #000">
    <div class="ln" style="top:0.7px;color:#6e7681">44</div>
    <div class="cl" style="top:0.7px"><span style="color:#569cd6">def</span> <span style="color:#dcdcaa">houses</span><span style="color:#ffd700">(</span><span style="color:#9cdcfe">score</span>,<span style="color:#9cdcfe">screen</span><span style="color:#ffd700">)</span>:</div>
  </div>
  <!-- minimap area -->
  <div class="abs" style="left:536px;top:33px;width:77px;height:303px;background:#1f1f1f"></div>
  <div class="abs" style="left:605px;top:33px;width:1px;height:303px;background:#181818"></div><div class="abs" style="left:605px;top:33px;width:8px;height:1px;background:#1b1b1b"></div>
  <div class="abs" style="left:535.6px;top:33px;width:1px;height:303px;background:#151515"></div>
  <div class="abs" style="left:606px;top:171px;width:7px;height:2px;background:#a0a0a0"></div>
</div>
<div style="position:absolute;left:0;top:0"><svg width="70" height="303" style="position:absolute;left:752px;top:53px;opacity:0.6"><rect x="0.80" y="0.30" width="1.72" height="0.7" fill="#569cd6"/><rect x="3.10" y="0.30" width="3.45" height="0.7" fill="#dcdcaa"/><rect x="6.55" y="0.30" width="0.57" height="0.7" fill="#ffd700"/><rect x="7.12" y="0.30" width="2.88" height="0.7" fill="#9cdcfe"/><rect x="10.00" y="0.30" width="0.57" height="0.7" fill="#cccccc"/><rect x="10.57" y="0.30" width="3.45" height="0.7" fill="#9cdcfe"/><rect x="14.02" y="0.30" width="0.57" height="0.7" fill="#ffd700"/><rect x="14.60" y="0.30" width="0.57" height="0.7" fill="#cccccc"/><rect x="0.80" y="2.60" width="0.57" height="0.7" fill="#6a9955"/><rect x="1.95" y="2.60" width="14.95" height="0.7" fill="#6a9955"/><rect x="0.80" y="3.75" width="1.72" height="0.7" fill="#569cd6"/><rect x="3.10" y="3.75" width="3.45" height="0.7" fill="#dcdcaa"/><rect x="6.55" y="3.75" width="0.57" height="0.7" fill="#ffd700"/><rect x="7.12" y="3.75" width="2.88" height="0.7" fill="#9cdcfe"/><rect x="10.00" y="3.75" width="0.57" height="0.7" fill="#cccccc"/><rect x="10.57" y="3.75" width="3.45" height="0.7" fill="#9cdcfe"/><rect x="14.02" y="3.75" width="0.57" height="0.7" fill="#ffd700"/><rect x="14.60" y="3.75" width="0.57" height="0.7" fill="#cccccc"/><rect x="3.10" y="4.90" width="1.72" height="0.7" fill="#9cdcfe"/><rect x="5.40" y="4.90" width="0.57" height="0.7" fill="#cccccc"/><rect x="6.55" y="4.90" width="3.45" height="0.7" fill="#4ec9b0"/><rect x="10.00" y="4.90" width="0.57" height="0.7" fill="#cccccc"/><rect x="10.57" y="4.90" width="2.88" height="0.7" fill="#4ec9b0"/><rect x="13.45" y="4.90" width="0.57" height="0.7" fill="#cccccc"/><rect x="14.02" y="4.90" width="2.88" height="0.7" fill="#4ec9b0"/><rect x="16.90" y="4.90" width="0.57" height="0.7" fill="#ffd700"/><rect x="17.47" y="4.90" width="1.72" height="0.7" fill="#9cdcfe"/><rect x="19.20" y="4.90" width="0.57" height="0.7" fill="#ffd700"/><rect x="3.10" y="6.05" width="3.45" height="0.7" fill="#4ec9b0"/><rect x="6.55" y="6.05" width="0.57" height="0.7" fill="#cccccc"/><rect x="7.12" y="6.05" width="2.88" height="0.7" fill="#4ec9b0"/><rect x="10.00" y="6.05" width="0.57" height="0.7" fill="#cccccc"/><rect x="10.57" y="6.05" width="2.88" height="0.7" fill="#9cdcfe"/><rect x="13.45" y="6.05" width="0.57" height="0.7" fill="#cccccc"/><rect x="14.02" y="6.05" width="2.88" height="0.7" fill="#dcdcaa"/><rect x="16.90" y="6.05" width="1.15" height="0.7" fill="#ffd700"/><rect x="3.10" y="7.20" width="3.45" height="0.7" fill="#4ec9b0"/><rect x="6.55" y="7.20" width="0.57" height="0.7" fill="#cccccc"/><rect x="7.12" y="7.20" width="2.88" height="0.7" fill="#4ec9b0"/><rect x="10.00" y="7.20" width="0.57" height="0.7" fill="#cccccc"/><rect x="10.57" y="7.20" width="2.88" height="0.7" fill="#9cdcfe"/><rect x="13.45" y="7.20" width="0.57" height="0.7" fill="#cccccc"/><rect x="14.02" y="7.20" width="2.88" height="0.7" fill="#dcdcaa"/><rect x="16.90" y="7.20" width="1.15" height="0.7" fill="#ffd700"/><rect x="3.10" y="8.35" width="4.60" height="0.7" fill="#dcdcaa"/><rect x="7.70" y="8.35" width="0.57" height="0.7" fill="#ffd700"/><rect x="8.27" y="8.35" width="0.57" height="0.7" fill="#569cd6"/><rect x="8.85" y="8.35" width="13.22" height="0.7" fill="#ce9178"/><rect x="3.10" y="9.50" width="3.45" height="0.7" fill="#c586c0"/><rect x="7.12" y="9.50" width="0.57" height="0.7" fill="#9cdcfe"/><rect x="3.10" y="10.65" width="2.88" height="0.7" fill="#c586c0"/><rect x="6.55" y="10.65" width="2.30" height="0.7" fill="#569cd6"/><rect x="8.85" y="10.65" width="0.57" height="0.7" fill="#cccccc"/><rect x="3.10" y="11.80" width="1.72" height="0.7" fill="#9cdcfe"/><rect x="4.82" y="11.80" width="0.57" height="0.7" fill="#cccccc"/><rect x="5.40" y="11.80" width="2.30" height="0.7" fill="#dcdcaa"/><rect x="7.70" y="11.80" width="1.15" height="0.7" fill="#ffd700"/><rect x="3.10" y="12.95" width="10.35" height="0.7" fill="#dcdcaa"/><rect x="13.45" y="12.95" width="0.57" height="0.7" fill="#ffd700"/><rect x="14.02" y="12.95" width="2.30" height="0.7" fill="#ce9178"/><rect x="16.90" y="12.95" width="2.30" height="0.7" fill="#ce9178"/><rect x="19.77" y="12.95" width="2.88" height="0.7" fill="#ce9178"/><rect x="23.22" y="12.95" width="0.57" height="0.7" fill="#ce9178"/><rect x="24.37" y="12.95" width="3.45" height="0.7" fill="#ce9178"/><rect x="27.82" y="12.95" width="1.15" height="0.7" fill="#d7ba7d"/><rect x="29.55" y="12.95" width="2.88" height="0.7" fill="#ce9178"/><rect x="33.00" y="12.95" width="1.15" height="0.7" fill="#ce9178"/><rect x="34.72" y="12.95" width="2.88" height="0.7" fill="#ce9178"/><rect x="38.17" y="12.95" width="1.15" height="0.7" fill="#ce9178"/><rect x="39.32" y="12.95" width="1.15" height="0.7" fill="#d7ba7d"/><rect x="41.05" y="12.95" width="0.57" height="0.7" fill="#ce9178"/><rect x="42.20" y="12.95" width="2.30" height="0.7" fill="#ce9178"/><rect x="45.07" y="12.95" width="2.88" height="0.7" fill="#ce9178"/><rect x="47.95" y="12.95" width="0.57" height="0.7" fill="#cccccc"/><rect x="48.52" y="12.95" width="3.45" height="0.7" fill="#9cdcfe"/><rect x="51.97" y="12.95" width="0.57" height="0.7" fill="#ffd700"/><rect x="3.10" y="14.10" width="1.15" height="0.7" fill="#c586c0"/><rect x="4.82" y="14.10" width="0.57" height="0.7" fill="#9cdcfe"/><rect x="5.97" y="14.10" width="0.57" height="0.7" fill="#9cdcfe"/><rect x="7.12" y="14.10" width="0.57" height="0.7" fill="#9cdcfe"/><rect x="8.27" y="14.10" width="0.57" height="0.7" fill="#9cdcfe"/><rect x="9.42" y="14.10" width="1.15" height="0.7" fill="#9cdcfe"/><rect x="5.40" y="15.25" width="3.45" height="0.7" fill="#c586c0"/><rect x="9.42" y="15.25" width="0.57" height="0.7" fill="#9cdcfe"/><rect x="5.40" y="16.40" width="1.72" height="0.7" fill="#9cdcfe"/><rect x="7.12" y="16.40" width="0.57" height="0.7" fill="#cccccc"/><rect x="7.70" y="16.40" width="2.30" height="0.7" fill="#dcdcaa"/><rect x="10.00" y="16.40" width="0.57" height="0.7" fill="#ffd700"/><rect x="10.57" y="16.40" width="3.45" height="0.7" fill="#9cdcfe"/><rect x="14.02" y="16.40" width="0.57" height="0.7" fill="#ffd700"/><rect x="5.40" y="17.55" width="1.15" height="0.7" fill="#c586c0"/><rect x="7.12" y="17.55" width="0.57" height="0.7" fill="#9cdcfe"/><rect x="8.27" y="17.55" width="0.57" height="0.7" fill="#9cdcfe"/><rect x="9.42" y="17.55" width="0.57" height="0.7" fill="#9cdcfe"/><rect x="10.57" y="17.55" width="0.57" height="0.7" fill="#9cdcfe"/><rect x="11.72" y="17.55" width="0.57" height="0.7" fill="#9cdcfe"/><rect x="12.87" y="17.55" width="1.15" height="0.7" fill="#9cdcfe"/><rect x="7.70" y="18.70" width="1.15" height="0.7" fill="#c586c0"/><rect x="9.42" y="18.70" width="0.57" height="0.7" fill="#9cdcfe"/><rect x="10.57" y="18.70" width="0.57" height="0.7" fill="#9cdcfe"/><rect x="11.72" y="18.70" width="0.57" height="0.7" fill="#9cdcfe"/><rect x="12.87" y="18.70" width="0.57" height="0.7" fill="#9cdcfe"/><rect x="14.02" y="18.70" width="0.57" height="0.7" fill="#9cdcfe"/><rect x="15.17" y="18.70" width="1.15" height="0.7" fill="#9cdcfe"/><rect x="7.70" y="19.85" width="2.88" height="0.7" fill="#c586c0"/><rect x="11.15" y="19.85" width="2.30" height="0.7" fill="#569cd6"/><rect x="13.45" y="19.85" width="0.57" height="0.7" fill="#cccccc"/><rect x="7.70" y="21.00" width="1.72" height="0.7" fill="#9cdcfe"/><rect x="9.42" y="21.00" width="0.57" height="0.7" fill="#cccccc"/><rect x="10.00" y="21.00" width="2.30" height="0.7" fill="#dcdcaa"/><rect x="12.30" y="21.00" width="1.15" height="0.7" fill="#ffd700"/><rect x="7.70" y="22.15" width="1.15" height="0.7" fill="#c586c0"/><rect x="9.42" y="22.15" width="0.57" height="0.7" fill="#9cdcfe"/><rect x="10.57" y="22.15" width="1.15" height="0.7" fill="#9cdcfe"/><rect x="10.00" y="23.30" width="3.45" height="0.7" fill="#c586c0"/><rect x="10.00" y="24.45" width="1.15" height="0.7" fill="#c586c0"/><rect x="11.73" y="24.45" width="0.57" height="0.7" fill="#9cdcfe"/><rect x="12.88" y="24.45" width="1.15" height="0.7" fill="#9cdcfe"/><rect x="12.30" y="25.60" width="3.45" height="0.7" fill="#c586c0"/><rect x="16.32" y="25.60" width="0.57" height="0.7" fill="#9cdcfe"/><rect x="12.30" y="26.75" width="1.15" height="0.7" fill="#c586c0"/><rect x="14.02" y="26.75" width="0.57" height="0.7" fill="#9cdcfe"/><rect x="15.17" y="26.75" width="1.15" height="0.7" fill="#9cdcfe"/><rect x="14.60" y="27.90" width="2.88" height="0.7" fill="#c586c0"/><rect x="18.05" y="27.90" width="2.88" height="0.7" fill="#cccccc"/><rect x="0.80" y="30.20" width="1.72" height="0.7" fill="#569cd6"/><rect x="3.10" y="30.20" width="3.45" height="0.7" fill="#dcdcaa"/><rect x="6.55" y="30.20" width="0.57" height="0.7" fill="#ffd700"/><rect x="7.12" y="30.20" width="2.88" height="0.7" fill="#9cdcfe"/><rect x="10.00" y="30.20" width="0.57" height="0.7" fill="#cccccc"/><rect x="10.57" y="30.20" width="3.45" height="0.7" fill="#9cdcfe"/><rect x="14.02" y="30.20" width="0.57" height="0.7" fill="#ffd700"/><rect x="14.60" y="30.20" width="0.57" height="0.7" fill="#cccccc"/><rect x="3.10" y="31.35" width="1.72" height="0.7" fill="#9cdcfe"/><rect x="4.82" y="31.35" width="0.57" height="0.7" fill="#cccccc"/><rect x="5.40" y="31.35" width="2.30" height="0.7" fill="#dcdcaa"/><rect x="7.70" y="31.35" width="1.15" height="0.7" fill="#ffd700"/><rect x="3.10" y="32.50" width="1.15" height="0.7" fill="#9cdcfe"/><rect x="4.82" y="32.50" width="0.57" height="0.7" fill="#cccccc"/><rect x="5.97" y="32.50" width="2.30" height="0.7" fill="#4ec9b0"/><rect x="8.27" y="32.50" width="0.57" height="0.7" fill="#cccccc"/><rect x="8.85" y="32.50" width="2.30" height="0.7" fill="#dcdcaa"/><rect x="11.15" y="32.50" width="1.15" height="0.7" fill="#ffd700"/><rect x="12.30" y="32.50" width="0.57" height="0.7" fill="#cccccc"/><rect x="3.10" y="33.65" width="1.15" height="0.7" fill="#c586c0"/><rect x="4.82" y="33.65" width="0.57" height="0.7" fill="#9cdcfe"/><rect x="5.97" y="33.65" width="0.57" height="0.7" fill="#9cdcfe"/><rect x="7.12" y="33.65" width="1.15" height="0.7" fill="#9cdcfe"/><rect x="5.40" y="34.80" width="1.72" height="0.7" fill="#9cdcfe"/><rect x="7.12" y="34.80" width="0.57" height="0.7" fill="#cccccc"/><rect x="7.70" y="34.80" width="2.30" height="0.7" fill="#dcdcaa"/><rect x="10.00" y="34.80" width="1.15" height="0.7" fill="#ffd700"/><rect x="5.40" y="35.95" width="2.88" height="0.7" fill="#c586c0"/><rect x="8.85" y="35.95" width="2.88" height="0.7" fill="#cccccc"/><rect x="7.70" y="37.10" width="3.45" height="0.7" fill="#c586c0"/><rect x="11.72" y="37.10" width="0.57" height="0.7" fill="#9cdcfe"/><rect x="7.70" y="38.25" width="1.72" height="0.7" fill="#9cdcfe"/><rect x="10.00" y="38.25" width="0.57" height="0.7" fill="#cccccc"/><rect x="11.15" y="38.25" width="5.75" height="0.7" fill="#4ec9b0"/><rect x="16.90" y="38.25" width="0.57" height="0.7" fill="#ffd700"/><rect x="17.47" y="38.25" width="9.77" height="0.7" fill="#dcdcaa"/><rect x="27.25" y="38.25" width="0.57" height="0.7" fill="#da70d6"/><rect x="27.82" y="38.25" width="2.88" height="0.7" fill="#9cdcfe"/><rect x="30.70" y="38.25" width="0.57" height="0.7" fill="#cccccc"/><rect x="7.70" y="39.40" width="2.88" height="0.7" fill="#c586c0"/><rect x="11.15" y="39.40" width="2.88" height="0.7" fill="#cccccc"/><rect x="10.00" y="40.55" width="1.15" height="0.7" fill="#c586c0"/><rect x="11.73" y="40.55" width="1.15" height="0.7" fill="#9cdcfe"/><rect x="13.45" y="40.55" width="1.15" height="0.7" fill="#cccccc"/><rect x="15.18" y="40.55" width="0.57" height="0.7" fill="#9cdcfe"/><rect x="15.75" y="40.55" width="0.57" height="0.7" fill="#cccccc"/><rect x="10.00" y="41.70" width="1.15" height="0.7" fill="#c586c0"/><rect x="11.73" y="41.70" width="1.15" height="0.7" fill="#9cdcfe"/><rect x="13.45" y="41.70" width="1.15" height="0.7" fill="#cccccc"/><rect x="15.18" y="41.70" width="0.57" height="0.7" fill="#9cdcfe"/><rect x="15.75" y="41.70" width="0.57" height="0.7" fill="#cccccc"/><rect x="10.00" y="42.85" width="3.45" height="0.7" fill="#4ec9b0"/><rect x="13.45" y="42.85" width="0.57" height="0.7" fill="#cccccc"/><rect x="14.02" y="42.85" width="4.02" height="0.7" fill="#4ec9b0"/><rect x="18.05" y="42.85" width="0.57" height="0.7" fill="#cccccc"/><rect x="18.62" y="42.85" width="2.30" height="0.7" fill="#dcdcaa"/><rect x="20.92" y="42.85" width="1.15" height="0.7" fill="#ffd700"/><rect x="10.00" y="44.00" width="1.15" height="0.7" fill="#c586c0"/><rect x="11.73" y="44.00" width="0.57" height="0.7" fill="#9cdcfe"/><rect x="12.88" y="44.00" width="0.57" height="0.7" fill="#9cdcfe"/><rect x="14.02" y="44.00" width="0.57" height="0.7" fill="#9cdcfe"/><rect x="15.17" y="44.00" width="0.57" height="0.7" fill="#9cdcfe"/><rect x="16.32" y="44.00" width="0.57" height="0.7" fill="#9cdcfe"/><rect x="17.47" y="44.00" width="1.15" height="0.7" fill="#9cdcfe"/><rect x="12.30" y="45.15" width="1.72" height="0.7" fill="#9cdcfe"/><rect x="14.02" y="45.15" width="0.57" height="0.7" fill="#cccccc"/><rect x="14.60" y="45.15" width="2.30" height="0.7" fill="#dcdcaa"/><rect x="16.90" y="45.15" width="1.15" height="0.7" fill="#ffd700"/><rect x="12.30" y="46.30" width="1.15" height="0.7" fill="#c586c0"/><rect x="14.02" y="46.30" width="0.57" height="0.7" fill="#9cdcfe"/><rect x="15.17" y="46.30" width="0.57" height="0.7" fill="#9cdcfe"/><rect x="16.32" y="46.30" width="0.57" height="0.7" fill="#9cdcfe"/><rect x="17.47" y="46.30" width="0.57" height="0.7" fill="#9cdcfe"/><rect x="18.62" y="46.30" width="1.15" height="0.7" fill="#9cdcfe"/><rect x="14.60" y="47.45" width="1.15" height="0.7" fill="#c586c0"/><rect x="16.32" y="47.45" width="0.57" height="0.7" fill="#9cdcfe"/><rect x="17.47" y="47.45" width="1.15" height="0.7" fill="#9cdcfe"/><rect x="14.60" y="48.60" width="3.45" height="0.7" fill="#4ec9b0"/><rect x="18.05" y="48.60" width="0.57" height="0.7" fill="#cccccc"/><rect x="18.62" y="48.60" width="4.02" height="0.7" fill="#4ec9b0"/><rect x="22.65" y="48.60" width="0.57" height="0.7" fill="#cccccc"/><rect x="23.22" y="48.60" width="2.30" height="0.7" fill="#dcdcaa"/><rect x="25.52" y="48.60" width="1.15" height="0.7" fill="#ffd700"/><rect x="14.60" y="49.75" width="1.72" height="0.7" fill="#9cdcfe"/><rect x="16.32" y="49.75" width="0.57" height="0.7" fill="#cccccc"/><rect x="16.90" y="49.75" width="2.30" height="0.7" fill="#dcdcaa"/><rect x="19.20" y="49.75" width="1.15" height="0.7" fill="#ffd700"/><rect x="14.60" y="50.90" width="2.88" height="0.7" fill="#c586c0"/><rect x="18.05" y="50.90" width="2.88" height="0.7" fill="#cccccc"/><rect x="0.80" y="53.20" width="1.72" height="0.7" fill="#569cd6"/><rect x="3.10" y="53.20" width="4.60" height="0.7" fill="#dcdcaa"/><rect x="7.70" y="53.20" width="0.57" height="0.7" fill="#ffd700"/><rect x="8.27" y="53.20" width="2.88" height="0.7" fill="#9cdcfe"/><rect x="11.15" y="53.20" width="0.57" height="0.7" fill="#cccccc"/><rect x="12.30" y="53.20" width="1.72" height="0.7" fill="#9cdcfe"/><rect x="14.02" y="53.20" width="0.57" height="0.7" fill="#cccccc"/><rect x="14.60" y="53.20" width="0.57" height="0.7" fill="#9cdcfe"/><rect x="15.17" y="53.20" width="0.57" height="0.7" fill="#cccccc"/><rect x="15.75" y="53.20" width="3.45" height="0.7" fill="#9cdcfe"/><rect x="19.20" y="53.20" width="0.57" height="0.7" fill="#ffd700"/><rect x="19.77" y="53.20" width="0.57" height="0.7" fill="#cccccc"/><rect x="3.10" y="54.35" width="1.15" height="0.7" fill="#c586c0"/><rect x="4.82" y="54.35" width="0.57" height="0.7" fill="#9cdcfe"/><rect x="5.97" y="54.35" width="0.57" height="0.7" fill="#9cdcfe"/><rect x="7.12" y="54.35" width="1.15" height="0.7" fill="#9cdcfe"/><rect x="5.40" y="55.50" width="1.15" height="0.7" fill="#c586c0"/><rect x="7.12" y="55.50" width="1.15" height="0.7" fill="#9cdcfe"/><rect x="8.85" y="55.50" width="1.15" height="0.7" fill="#cccccc"/><rect x="10.58" y="55.50" width="0.57" height="0.7" fill="#9cdcfe"/><rect x="11.15" y="55.50" width="0.57" height="0.7" fill="#cccccc"/><rect x="5.40" y="56.65" width="1.72" height="0.7" fill="#9cdcfe"/><rect x="7.70" y="56.65" width="0.57" height="0.7" fill="#cccccc"/><rect x="8.85" y="56.65" width="3.45" height="0.7" fill="#4ec9b0"/><rect x="12.30" y="56.65" width="0.57" height="0.7" fill="#cccccc"/><rect x="12.87" y="56.65" width="2.88" height="0.7" fill="#4ec9b0"/><rect x="15.75" y="56.65" width="0.57" height="0.7" fill="#cccccc"/><rect x="16.32" y="56.65" width="2.88" height="0.7" fill="#4ec9b0"/><rect x="19.20" y="56.65" width="0.57" height="0.7" fill="#ffd700"/><rect x="19.77" y="56.65" width="1.72" height="0.7" fill="#9cdcfe"/><rect x="21.50" y="56.65" width="0.57" height="0.7" fill="#ffd700"/><rect x="5.40" y="57.80" width="3.45" height="0.7" fill="#4ec9b0"/><rect x="8.85" y="57.80" width="0.57" height="0.7" fill="#cccccc"/><rect x="9.42" y="57.80" width="4.02" height="0.7" fill="#4ec9b0"/><rect x="13.45" y="57.80" width="0.57" height="0.7" fill="#cccccc"/><rect x="14.02" y="57.80" width="2.30" height="0.7" fill="#dcdcaa"/><rect x="16.32" y="57.80" width="1.15" height="0.7" fill="#ffd700"/><rect x="5.40" y="58.95" width="1.15" height="0.7" fill="#c586c0"/><rect x="7.12" y="58.95" width="0.57" height="0.7" fill="#9cdcfe"/><rect x="8.27" y="58.95" width="1.15" height="0.7" fill="#9cdcfe"/><rect x="7.70" y="60.10" width="2.88" height="0.7" fill="#c586c0"/><rect x="11.15" y="60.10" width="2.88" height="0.7" fill="#cccccc"/><rect x="10.00" y="61.25" width="1.15" height="0.7" fill="#9cdcfe"/><rect x="11.73" y="61.25" width="0.57" height="0.7" fill="#cccccc"/><rect x="12.88" y="61.25" width="2.30" height="0.7" fill="#4ec9b0"/><rect x="15.17" y="61.25" width="0.57" height="0.7" fill="#cccccc"/><rect x="15.75" y="61.25" width="2.30" height="0.7" fill="#dcdcaa"/><rect x="18.05" y="61.25" width="1.15" height="0.7" fill="#ffd700"/><rect x="19.20" y="61.25" width="0.57" height="0.7" fill="#cccccc"/><rect x="19.77" y="61.25" width="1.15" height="0.7" fill="#9cdcfe"/><rect x="10.00" y="62.40" width="0.57" height="0.7" fill="#9cdcfe"/><rect x="10.57" y="62.40" width="0.57" height="0.7" fill="#cccccc"/><rect x="11.15" y="62.40" width="1.72" height="0.7" fill="#b5cea8"/><rect x="12.87" y="62.40" width="0.57" height="0.7" fill="#cccccc"/><rect x="13.45" y="62.40" width="1.72" height="0.7" fill="#b5cea8"/><rect x="7.70" y="63.55" width="2.88" height="0.7" fill="#c586c0"/><rect x="11.15" y="63.55" width="2.30" height="0.7" fill="#569cd6"/><rect x="13.45" y="63.55" width="0.57" height="0.7" fill="#cccccc"/><rect x="7.70" y="64.70" width="1.15" height="0.7" fill="#c586c0"/><rect x="9.42" y="64.70" width="0.57" height="0.7" fill="#9cdcfe"/><rect x="10.57" y="64.70" width="0.57" height="0.7" fill="#9cdcfe"/><rect x="11.72" y="64.70" width="1.15" height="0.7" fill="#9cdcfe"/><rect x="10.00" y="65.85" width="1.15" height="0.7" fill="#c586c0"/><rect x="11.73" y="65.85" width="1.15" height="0.7" fill="#9cdcfe"/><rect x="13.45" y="65.85" width="1.15" height="0.7" fill="#cccccc"/><rect x="15.18" y="65.85" width="0.57" height="0.7" fill="#9cdcfe"/><rect x="15.75" y="65.85" width="0.57" height="0.7" fill="#cccccc"/><rect x="10.00" y="67.00" width="3.45" height="0.7" fill="#4ec9b0"/><rect x="13.45" y="67.00" width="0.57" height="0.7" fill="#cccccc"/><rect x="14.02" y="67.00" width="4.02" height="0.7" fill="#4ec9b0"/><rect x="18.05" y="67.00" width="0.57" height="0.7" fill="#cccccc"/><rect x="18.62" y="67.00" width="2.30" height="0.7" fill="#dcdcaa"/><rect x="20.92" y="67.00" width="1.15" height="0.7" fill="#ffd700"/><rect x="10.00" y="68.15" width="10.35" height="0.7" fill="#dcdcaa"/><rect x="20.35" y="68.15" width="0.57" height="0.7" fill="#ffd700"/><rect x="20.92" y="68.15" width="2.30" height="0.7" fill="#ce9178"/><rect x="23.80" y="68.15" width="2.30" height="0.7" fill="#ce9178"/><rect x="26.67" y="68.15" width="2.88" height="0.7" fill="#ce9178"/><rect x="30.12" y="68.15" width="0.57" height="0.7" fill="#ce9178"/><rect x="31.27" y="68.15" width="3.45" height="0.7" fill="#ce9178"/><rect x="10.00" y="69.30" width="3.45" height="0.7" fill="#4ec9b0"/><rect x="13.45" y="69.30" width="0.57" height="0.7" fill="#cccccc"/><rect x="14.02" y="69.30" width="2.88" height="0.7" fill="#4ec9b0"/><rect x="16.90" y="69.30" width="0.57" height="0.7" fill="#cccccc"/><rect x="17.47" y="69.30" width="2.88" height="0.7" fill="#9cdcfe"/><rect x="20.35" y="69.30" width="0.57" height="0.7" fill="#cccccc"/><rect x="20.92" y="69.30" width="4.02" height="0.7" fill="#dcdcaa"/><rect x="10.00" y="70.45" width="5.17" height="0.7" fill="#dcdcaa"/><rect x="15.17" y="70.45" width="0.57" height="0.7" fill="#ffd700"/><rect x="15.75" y="70.45" width="1.15" height="0.7" fill="#b5cea8"/><rect x="16.90" y="70.45" width="0.57" height="0.7" fill="#cccccc"/><rect x="18.05" y="70.45" width="3.45" height="0.7" fill="#9cdcfe"/><rect x="21.50" y="70.45" width="0.57" height="0.7" fill="#ffd700"/><rect x="0.80" y="72.75" width="1.72" height="0.7" fill="#569cd6"/><rect x="3.10" y="72.75" width="3.45" height="0.7" fill="#dcdcaa"/><rect x="6.55" y="72.75" width="0.57" height="0.7" fill="#ffd700"/><rect x="7.12" y="72.75" width="2.88" height="0.7" fill="#9cdcfe"/><rect x="10.00" y="72.75" width="0.57" height="0.7" fill="#cccccc"/><rect x="10.57" y="72.75" width="3.45" height="0.7" fill="#9cdcfe"/><rect x="14.02" y="72.75" width="0.57" height="0.7" fill="#ffd700"/><rect x="14.60" y="72.75" width="0.57" height="0.7" fill="#cccccc"/><rect x="3.10" y="73.90" width="1.15" height="0.7" fill="#c586c0"/><rect x="4.82" y="73.90" width="0.57" height="0.7" fill="#9cdcfe"/><rect x="5.97" y="73.90" width="0.57" height="0.7" fill="#9cdcfe"/><rect x="7.12" y="73.90" width="0.57" height="0.7" fill="#9cdcfe"/><rect x="8.27" y="73.90" width="0.57" height="0.7" fill="#9cdcfe"/><rect x="9.42" y="73.90" width="1.15" height="0.7" fill="#9cdcfe"/><rect x="0.80" y="76.20" width="0.57" height="0.7" fill="#6a9955"/><rect x="1.95" y="76.20" width="14.95" height="0.7" fill="#6a9955"/><rect x="0.80" y="77.35" width="1.72" height="0.7" fill="#569cd6"/><rect x="3.10" y="77.35" width="6.32" height="0.7" fill="#dcdcaa"/><rect x="9.42" y="77.35" width="0.57" height="0.7" fill="#ffd700"/><rect x="10.00" y="77.35" width="2.30" height="0.7" fill="#9cdcfe"/><rect x="12.30" y="77.35" width="0.57" height="0.7" fill="#cccccc"/><rect x="12.87" y="77.35" width="3.45" height="0.7" fill="#9cdcfe"/><rect x="16.32" y="77.35" width="0.57" height="0.7" fill="#ffd700"/><rect x="16.90" y="77.35" width="0.57" height="0.7" fill="#cccccc"/><rect x="3.10" y="78.50" width="1.15" height="0.7" fill="#c586c0"/><rect x="4.82" y="78.50" width="0.57" height="0.7" fill="#9cdcfe"/><rect x="5.97" y="78.50" width="1.15" height="0.7" fill="#9cdcfe"/><rect x="5.40" y="79.65" width="1.15" height="0.7" fill="#c586c0"/><rect x="7.12" y="79.65" width="0.57" height="0.7" fill="#9cdcfe"/><rect x="8.27" y="79.65" width="0.57" height="0.7" fill="#9cdcfe"/><rect x="9.42" y="79.65" width="0.57" height="0.7" fill="#9cdcfe"/><rect x="10.57" y="79.65" width="0.57" height="0.7" fill="#9cdcfe"/><rect x="11.72" y="79.65" width="0.57" height="0.7" fill="#9cdcfe"/><rect x="12.87" y="79.65" width="1.15" height="0.7" fill="#9cdcfe"/><rect x="7.70" y="80.80" width="1.72" height="0.7" fill="#9cdcfe"/><rect x="9.42" y="80.80" width="0.57" height="0.7" fill="#cccccc"/><rect x="10.00" y="80.80" width="2.30" height="0.7" fill="#dcdcaa"/><rect x="12.30" y="80.80" width="1.15" height="0.7" fill="#ffd700"/><rect x="7.70" y="81.95" width="1.72" height="0.7" fill="#9cdcfe"/><rect x="10.00" y="81.95" width="0.57" height="0.7" fill="#cccccc"/><rect x="11.15" y="81.95" width="3.45" height="0.7" fill="#4ec9b0"/><rect x="14.60" y="81.95" width="0.57" height="0.7" fill="#ffd700"/><rect x="15.17" y="81.95" width="2.88" height="0.7" fill="#4fc1ff"/><rect x="18.05" y="81.95" width="1.15" height="0.7" fill="#cccccc"/><rect x="19.20" y="81.95" width="1.15" height="0.7" fill="#b5cea8"/><rect x="20.35" y="81.95" width="0.57" height="0.7" fill="#cccccc"/><rect x="21.50" y="81.95" width="3.45" height="0.7" fill="#4fc1ff"/><rect x="24.95" y="81.95" width="1.15" height="0.7" fill="#cccccc"/><rect x="26.10" y="81.95" width="1.72" height="0.7" fill="#b5cea8"/><rect x="27.82" y="81.95" width="0.57" height="0.7" fill="#cccccc"/><rect x="28.97" y="81.95" width="0.57" height="0.7" fill="#9cdcfe"/><rect x="29.55" y="81.95" width="0.57" height="0.7" fill="#cccccc"/><rect x="30.12" y="81.95" width="1.15" height="0.7" fill="#b5cea8"/><rect x="31.27" y="81.95" width="0.57" height="0.7" fill="#cccccc"/><rect x="32.42" y="81.95" width="1.15" height="0.7" fill="#b5cea8"/><rect x="33.57" y="81.95" width="0.57" height="0.7" fill="#cccccc"/><rect x="34.72" y="81.95" width="1.72" height="0.7" fill="#9cdcfe"/><rect x="36.45" y="81.95" width="0.57" height="0.7" fill="#cccccc"/><rect x="37.02" y="81.95" width="0.57" height="0.7" fill="#569cd6"/><rect x="37.60" y="81.95" width="8.62" height="0.7" fill="#ce9178"/><rect x="46.22" y="81.95" width="0.57" height="0.7" fill="#ffd700"/><rect x="0.80" y="84.25" width="1.72" height="0.7" fill="#569cd6"/><rect x="3.10" y="84.25" width="3.45" height="0.7" fill="#dcdcaa"/><rect x="6.55" y="84.25" width="0.57" height="0.7" fill="#ffd700"/><rect x="7.12" y="84.25" width="2.88" height="0.7" fill="#9cdcfe"/><rect x="10.00" y="84.25" width="0.57" height="0.7" fill="#cccccc"/><rect x="10.57" y="84.25" width="3.45" height="0.7" fill="#9cdcfe"/><rect x="14.02" y="84.25" width="0.57" height="0.7" fill="#ffd700"/><rect x="14.60" y="84.25" width="0.57" height="0.7" fill="#cccccc"/><rect x="3.10" y="85.40" width="1.15" height="0.7" fill="#c586c0"/><rect x="4.82" y="85.40" width="0.57" height="0.7" fill="#9cdcfe"/><rect x="5.97" y="85.40" width="0.57" height="0.7" fill="#9cdcfe"/><rect x="7.12" y="85.40" width="0.57" height="0.7" fill="#9cdcfe"/><rect x="8.27" y="85.40" width="1.15" height="0.7" fill="#9cdcfe"/><rect x="5.40" y="86.55" width="1.72" height="0.7" fill="#9cdcfe"/><rect x="7.12" y="86.55" width="0.57" height="0.7" fill="#cccccc"/><rect x="7.70" y="86.55" width="2.30" height="0.7" fill="#dcdcaa"/><rect x="10.00" y="86.55" width="1.15" height="0.7" fill="#ffd700"/><rect x="5.40" y="87.70" width="0.57" height="0.7" fill="#9cdcfe"/><rect x="5.97" y="87.70" width="0.57" height="0.7" fill="#cccccc"/><rect x="6.55" y="87.70" width="1.72" height="0.7" fill="#b5cea8"/><rect x="8.27" y="87.70" width="0.57" height="0.7" fill="#cccccc"/><rect x="8.85" y="87.70" width="1.72" height="0.7" fill="#b5cea8"/><rect x="5.40" y="88.85" width="2.88" height="0.7" fill="#c586c0"/><rect x="8.85" y="88.85" width="2.88" height="0.7" fill="#cccccc"/><rect x="5.40" y="90.00" width="3.45" height="0.7" fill="#c586c0"/><rect x="9.42" y="90.00" width="0.57" height="0.7" fill="#9cdcfe"/><rect x="5.40" y="91.15" width="1.15" height="0.7" fill="#c586c0"/><rect x="7.12" y="91.15" width="0.57" height="0.7" fill="#9cdcfe"/><rect x="8.27" y="91.15" width="0.57" height="0.7" fill="#9cdcfe"/><rect x="9.42" y="91.15" width="0.57" height="0.7" fill="#9cdcfe"/><rect x="10.57" y="91.15" width="1.15" height="0.7" fill="#9cdcfe"/><rect x="7.70" y="92.30" width="1.72" height="0.7" fill="#9cdcfe"/><rect x="10.00" y="92.30" width="0.57" height="0.7" fill="#cccccc"/><rect x="11.15" y="92.30" width="5.75" height="0.7" fill="#4ec9b0"/><rect x="16.90" y="92.30" width="0.57" height="0.7" fill="#ffd700"/><rect x="17.47" y="92.30" width="9.77" height="0.7" fill="#dcdcaa"/><rect x="27.25" y="92.30" width="0.57" height="0.7" fill="#da70d6"/><rect x="27.82" y="92.30" width="2.88" height="0.7" fill="#9cdcfe"/><rect x="30.70" y="92.30" width="0.57" height="0.7" fill="#cccccc"/><rect x="7.70" y="93.45" width="3.45" height="0.7" fill="#4ec9b0"/><rect x="11.15" y="93.45" width="0.57" height="0.7" fill="#cccccc"/><rect x="11.72" y="93.45" width="4.02" height="0.7" fill="#4ec9b0"/><rect x="15.75" y="93.45" width="0.57" height="0.7" fill="#cccccc"/><rect x="16.32" y="93.45" width="2.30" height="0.7" fill="#dcdcaa"/><rect x="18.62" y="93.45" width="1.15" height="0.7" fill="#ffd700"/><rect x="7.70" y="94.60" width="1.72" height="0.7" fill="#9cdcfe"/><rect x="9.42" y="94.60" width="0.57" height="0.7" fill="#cccccc"/><rect x="10.00" y="94.60" width="2.30" height="0.7" fill="#dcdcaa"/><rect x="12.30" y="94.60" width="1.15" height="0.7" fill="#ffd700"/><rect x="7.70" y="95.75" width="1.72" height="0.7" fill="#9cdcfe"/><rect x="10.00" y="95.75" width="0.57" height="0.7" fill="#cccccc"/><rect x="11.15" y="95.75" width="3.45" height="0.7" fill="#4ec9b0"/><rect x="14.60" y="95.75" width="0.57" height="0.7" fill="#ffd700"/><rect x="15.17" y="95.75" width="2.88" height="0.7" fill="#4fc1ff"/><rect x="18.05" y="95.75" width="1.15" height="0.7" fill="#cccccc"/><rect x="19.20" y="95.75" width="1.15" height="0.7" fill="#b5cea8"/><rect x="20.35" y="95.75" width="0.57" height="0.7" fill="#cccccc"/><rect x="21.50" y="95.75" width="3.45" height="0.7" fill="#4fc1ff"/><rect x="24.95" y="95.75" width="1.15" height="0.7" fill="#cccccc"/><rect x="26.10" y="95.75" width="1.72" height="0.7" fill="#b5cea8"/><rect x="27.82" y="95.75" width="0.57" height="0.7" fill="#cccccc"/><rect x="28.97" y="95.75" width="0.57" height="0.7" fill="#9cdcfe"/><rect x="29.55" y="95.75" width="0.57" height="0.7" fill="#cccccc"/><rect x="7.70" y="96.90" width="1.72" height="0.7" fill="#9cdcfe"/><rect x="9.42" y="96.90" width="0.57" height="0.7" fill="#cccccc"/><rect x="10.00" y="96.90" width="2.30" height="0.7" fill="#dcdcaa"/><rect x="12.30" y="96.90" width="1.15" height="0.7" fill="#ffd700"/><rect x="0.80" y="99.20" width="1.72" height="0.7" fill="#569cd6"/><rect x="3.10" y="99.20" width="6.32" height="0.7" fill="#dcdcaa"/><rect x="9.42" y="99.20" width="0.57" height="0.7" fill="#ffd700"/><rect x="10.00" y="99.20" width="2.30" height="0.7" fill="#9cdcfe"/><rect x="12.30" y="99.20" width="0.57" height="0.7" fill="#cccccc"/><rect x="12.87" y="99.20" width="3.45" height="0.7" fill="#9cdcfe"/><rect x="16.32" y="99.20" width="0.57" height="0.7" fill="#ffd700"/><rect x="16.90" y="99.20" width="0.57" height="0.7" fill="#cccccc"/><rect x="3.10" y="100.35" width="3.45" height="0.7" fill="#c586c0"/><rect x="7.12" y="100.35" width="0.57" height="0.7" fill="#9cdcfe"/><rect x="3.10" y="101.50" width="2.88" height="0.7" fill="#c586c0"/><rect x="6.55" y="101.50" width="2.88" height="0.7" fill="#cccccc"/><rect x="5.40" y="102.65" width="3.45" height="0.7" fill="#c586c0"/><rect x="9.42" y="102.65" width="0.57" height="0.7" fill="#9cdcfe"/><rect x="5.40" y="103.80" width="1.15" height="0.7" fill="#9cdcfe"/><rect x="7.12" y="103.80" width="0.57" height="0.7" fill="#cccccc"/><rect x="8.27" y="103.80" width="2.30" height="0.7" fill="#4ec9b0"/><rect x="10.57" y="103.80" width="0.57" height="0.7" fill="#cccccc"/><rect x="11.15" y="103.80" width="2.30" height="0.7" fill="#dcdcaa"/><rect x="13.45" y="103.80" width="1.15" height="0.7" fill="#ffd700"/><rect x="5.40" y="104.95" width="3.45" height="0.7" fill="#c586c0"/><rect x="9.42" y="104.95" width="0.57" height="0.7" fill="#9cdcfe"/><rect x="5.40" y="106.10" width="3.45" height="0.7" fill="#4ec9b0"/><rect x="8.85" y="106.10" width="0.57" height="0.7" fill="#cccccc"/><rect x="9.42" y="106.10" width="2.88" height="0.7" fill="#4ec9b0"/><rect x="12.30" y="106.10" width="0.57" height="0.7" fill="#cccccc"/><rect x="12.87" y="106.10" width="2.88" height="0.7" fill="#9cdcfe"/><rect x="15.75" y="106.10" width="0.57" height="0.7" fill="#cccccc"/><rect x="16.32" y="106.10" width="2.88" height="0.7" fill="#dcdcaa"/><rect x="19.20" y="106.10" width="1.15" height="0.7" fill="#ffd700"/><rect x="5.40" y="107.25" width="0.57" height="0.7" fill="#9cdcfe"/><rect x="5.97" y="107.25" width="0.57" height="0.7" fill="#cccccc"/><rect x="6.55" y="107.25" width="1.72" height="0.7" fill="#b5cea8"/><rect x="8.27" y="107.25" width="0.57" height="0.7" fill="#cccccc"/><rect x="8.85" y="107.25" width="1.72" height="0.7" fill="#b5cea8"/><rect x="5.40" y="108.40" width="1.15" height="0.7" fill="#c586c0"/><rect x="7.12" y="108.40" width="1.15" height="0.7" fill="#9cdcfe"/><rect x="8.85" y="108.40" width="1.15" height="0.7" fill="#cccccc"/><rect x="10.58" y="108.40" width="0.57" height="0.7" fill="#9cdcfe"/><rect x="11.15" y="108.40" width="0.57" height="0.7" fill="#cccccc"/><rect x="5.40" y="109.55" width="3.45" height="0.7" fill="#4ec9b0"/><rect x="8.85" y="109.55" width="0.57" height="0.7" fill="#cccccc"/><rect x="9.42" y="109.55" width="2.88" height="0.7" fill="#4ec9b0"/><rect x="12.30" y="109.55" width="0.57" height="0.7" fill="#cccccc"/><rect x="12.87" y="109.55" width="2.88" height="0.7" fill="#9cdcfe"/><rect x="15.75" y="109.55" width="0.57" height="0.7" fill="#cccccc"/><rect x="16.32" y="109.55" width="2.88" height="0.7" fill="#dcdcaa"/><rect x="19.20" y="109.55" width="1.15" height="0.7" fill="#ffd700"/><rect x="5.40" y="110.70" width="1.15" height="0.7" fill="#c586c0"/><rect x="7.12" y="110.70" width="0.57" height="0.7" fill="#9cdcfe"/><rect x="8.27" y="110.70" width="0.57" height="0.7" fill="#9cdcfe"/><rect x="9.42" y="110.70" width="0.57" height="0.7" fill="#9cdcfe"/><rect x="10.57" y="110.70" width="0.57" height="0.7" fill="#9cdcfe"/><rect x="11.72" y="110.70" width="1.15" height="0.7" fill="#9cdcfe"/><rect x="7.70" y="111.85" width="1.72" height="0.7" fill="#9cdcfe"/><rect x="10.00" y="111.85" width="0.57" height="0.7" fill="#cccccc"/><rect x="11.15" y="111.85" width="3.45" height="0.7" fill="#4ec9b0"/><rect x="14.60" y="111.85" width="0.57" height="0.7" fill="#cccccc"/><rect x="15.17" y="111.85" width="2.88" height="0.7" fill="#4ec9b0"/><rect x="18.05" y="111.85" width="0.57" height="0.7" fill="#cccccc"/><rect x="18.62" y="111.85" width="2.88" height="0.7" fill="#4ec9b0"/><rect x="21.50" y="111.85" width="0.57" height="0.7" fill="#ffd700"/><rect x="22.07" y="111.85" width="1.72" height="0.7" fill="#9cdcfe"/><rect x="23.80" y="111.85" width="0.57" height="0.7" fill="#ffd700"/><rect x="7.70" y="113.00" width="1.15" height="0.7" fill="#c586c0"/><rect x="9.42" y="113.00" width="0.57" height="0.7" fill="#9cdcfe"/><rect x="10.57" y="113.00" width="0.57" height="0.7" fill="#9cdcfe"/><rect x="11.72" y="113.00" width="0.57" height="0.7" fill="#9cdcfe"/><rect x="12.87" y="113.00" width="0.57" height="0.7" fill="#9cdcfe"/><rect x="14.02" y="113.00" width="0.57" height="0.7" fill="#9cdcfe"/><rect x="15.17" y="113.00" width="1.15" height="0.7" fill="#9cdcfe"/><rect x="10.00" y="114.15" width="1.72" height="0.7" fill="#9cdcfe"/><rect x="11.72" y="114.15" width="0.57" height="0.7" fill="#cccccc"/><rect x="12.30" y="114.15" width="2.30" height="0.7" fill="#dcdcaa"/><rect x="14.60" y="114.15" width="1.15" height="0.7" fill="#ffd700"/><rect x="10.00" y="115.30" width="1.15" height="0.7" fill="#c586c0"/><rect x="11.73" y="115.30" width="1.15" height="0.7" fill="#9cdcfe"/><rect x="13.45" y="115.30" width="1.15" height="0.7" fill="#cccccc"/><rect x="15.18" y="115.30" width="0.57" height="0.7" fill="#9cdcfe"/><rect x="15.75" y="115.30" width="0.57" height="0.7" fill="#cccccc"/><rect x="10.00" y="116.45" width="1.72" height="0.7" fill="#9cdcfe"/><rect x="11.72" y="116.45" width="0.57" height="0.7" fill="#cccccc"/><rect x="12.30" y="116.45" width="2.30" height="0.7" fill="#dcdcaa"/><rect x="14.60" y="116.45" width="1.15" height="0.7" fill="#ffd700"/><rect x="10.00" y="117.60" width="0.57" height="0.7" fill="#9cdcfe"/><rect x="10.57" y="117.60" width="0.57" height="0.7" fill="#cccccc"/><rect x="11.15" y="117.60" width="1.72" height="0.7" fill="#b5cea8"/><rect x="12.87" y="117.60" width="0.57" height="0.7" fill="#cccccc"/><rect x="13.45" y="117.60" width="1.72" height="0.7" fill="#b5cea8"/><rect x="10.00" y="118.75" width="2.88" height="0.7" fill="#c586c0"/><rect x="13.45" y="118.75" width="2.88" height="0.7" fill="#cccccc"/><rect x="12.30" y="119.90" width="1.72" height="0.7" fill="#9cdcfe"/><rect x="14.60" y="119.90" width="0.57" height="0.7" fill="#cccccc"/><rect x="15.75" y="119.90" width="3.45" height="0.7" fill="#4ec9b0"/><rect x="19.20" y="119.90" width="0.57" height="0.7" fill="#cccccc"/><rect x="19.77" y="119.90" width="2.88" height="0.7" fill="#4ec9b0"/><rect x="22.65" y="119.90" width="0.57" height="0.7" fill="#cccccc"/><rect x="23.22" y="119.90" width="2.88" height="0.7" fill="#4ec9b0"/><rect x="26.10" y="119.90" width="0.57" height="0.7" fill="#ffd700"/><rect x="26.67" y="119.90" width="1.72" height="0.7" fill="#9cdcfe"/><rect x="28.40" y="119.90" width="0.57" height="0.7" fill="#ffd700"/><rect x="12.30" y="121.05" width="3.45" height="0.7" fill="#4ec9b0"/><rect x="15.75" y="121.05" width="0.57" height="0.7" fill="#cccccc"/><rect x="16.32" y="121.05" width="4.02" height="0.7" fill="#4ec9b0"/><rect x="20.35" y="121.05" width="0.57" height="0.7" fill="#cccccc"/><rect x="20.92" y="121.05" width="2.30" height="0.7" fill="#dcdcaa"/><rect x="23.22" y="121.05" width="1.15" height="0.7" fill="#ffd700"/><rect x="12.30" y="122.20" width="1.15" height="0.7" fill="#9cdcfe"/><rect x="14.02" y="122.20" width="0.57" height="0.7" fill="#cccccc"/><rect x="15.17" y="122.20" width="2.30" height="0.7" fill="#4ec9b0"/><rect x="17.47" y="122.20" width="0.57" height="0.7" fill="#cccccc"/><rect x="18.05" y="122.20" width="2.30" height="0.7" fill="#dcdcaa"/><rect x="20.35" y="122.20" width="1.15" height="0.7" fill="#ffd700"/><rect x="0.80" y="124.50" width="1.72" height="0.7" fill="#569cd6"/><rect x="3.10" y="124.50" width="6.32" height="0.7" fill="#dcdcaa"/><rect x="9.42" y="124.50" width="0.57" height="0.7" fill="#ffd700"/><rect x="10.00" y="124.50" width="2.30" height="0.7" fill="#9cdcfe"/><rect x="12.30" y="124.50" width="0.57" height="0.7" fill="#cccccc"/><rect x="12.87" y="124.50" width="3.45" height="0.7" fill="#9cdcfe"/><rect x="16.32" y="124.50" width="0.57" height="0.7" fill="#ffd700"/><rect x="16.90" y="124.50" width="0.57" height="0.7" fill="#cccccc"/><rect x="3.10" y="125.65" width="1.15" height="0.7" fill="#c586c0"/><rect x="4.82" y="125.65" width="0.57" height="0.7" fill="#9cdcfe"/><rect x="5.97" y="125.65" width="0.57" height="0.7" fill="#9cdcfe"/><rect x="7.12" y="125.65" width="1.15" height="0.7" fill="#9cdcfe"/><rect x="5.40" y="126.80" width="5.17" height="0.7" fill="#dcdcaa"/><rect x="10.57" y="126.80" width="0.57" height="0.7" fill="#ffd700"/><rect x="11.15" y="126.80" width="1.15" height="0.7" fill="#b5cea8"/><rect x="12.30" y="126.80" width="0.57" height="0.7" fill="#cccccc"/><rect x="13.45" y="126.80" width="3.45" height="0.7" fill="#9cdcfe"/><rect x="16.90" y="126.80" width="0.57" height="0.7" fill="#ffd700"/><rect x="5.40" y="127.95" width="1.72" height="0.7" fill="#9cdcfe"/><rect x="7.70" y="127.95" width="0.57" height="0.7" fill="#cccccc"/><rect x="8.85" y="127.95" width="3.45" height="0.7" fill="#4ec9b0"/><rect x="12.30" y="127.95" width="0.57" height="0.7" fill="#cccccc"/><rect x="12.87" y="127.95" width="2.88" height="0.7" fill="#4ec9b0"/><rect x="15.75" y="127.95" width="0.57" height="0.7" fill="#cccccc"/><rect x="16.32" y="127.95" width="2.88" height="0.7" fill="#4ec9b0"/><rect x="19.20" y="127.95" width="0.57" height="0.7" fill="#ffd700"/><rect x="19.77" y="127.95" width="1.72" height="0.7" fill="#9cdcfe"/><rect x="21.50" y="127.95" width="0.57" height="0.7" fill="#ffd700"/><rect x="5.40" y="129.10" width="2.88" height="0.7" fill="#c586c0"/><rect x="8.85" y="129.10" width="2.88" height="0.7" fill="#cccccc"/><rect x="7.70" y="130.25" width="3.45" height="0.7" fill="#c586c0"/><rect x="7.70" y="131.40" width="1.72" height="0.7" fill="#9cdcfe"/><rect x="9.42" y="131.40" width="0.57" height="0.7" fill="#cccccc"/><rect x="10.00" y="131.40" width="2.30" height="0.7" fill="#dcdcaa"/><rect x="12.30" y="131.40" width="0.57" height="0.7" fill="#ffd700"/><rect x="12.87" y="131.40" width="3.45" height="0.7" fill="#9cdcfe"/><rect x="16.32" y="131.40" width="0.57" height="0.7" fill="#ffd700"/><rect x="7.70" y="132.55" width="1.72" height="0.7" fill="#9cdcfe"/><rect x="10.00" y="132.55" width="0.57" height="0.7" fill="#cccccc"/><rect x="11.15" y="132.55" width="3.45" height="0.7" fill="#4ec9b0"/><rect x="14.60" y="132.55" width="0.57" height="0.7" fill="#ffd700"/><rect x="15.17" y="132.55" width="2.88" height="0.7" fill="#4fc1ff"/><rect x="18.05" y="132.55" width="1.15" height="0.7" fill="#cccccc"/><rect x="19.20" y="132.55" width="1.15" height="0.7" fill="#b5cea8"/><rect x="20.35" y="132.55" width="0.57" height="0.7" fill="#cccccc"/><rect x="21.50" y="132.55" width="3.45" height="0.7" fill="#4fc1ff"/><rect x="24.95" y="132.55" width="1.15" height="0.7" fill="#cccccc"/><rect x="26.10" y="132.55" width="1.72" height="0.7" fill="#b5cea8"/><rect x="27.82" y="132.55" width="0.57" height="0.7" fill="#cccccc"/><rect x="28.97" y="132.55" width="0.57" height="0.7" fill="#9cdcfe"/><rect x="29.55" y="132.55" width="0.57" height="0.7" fill="#cccccc"/><rect x="30.12" y="132.55" width="1.15" height="0.7" fill="#b5cea8"/><rect x="31.27" y="132.55" width="0.57" height="0.7" fill="#cccccc"/><rect x="32.42" y="132.55" width="1.15" height="0.7" fill="#b5cea8"/><rect x="33.57" y="132.55" width="0.57" height="0.7" fill="#cccccc"/><rect x="34.72" y="132.55" width="1.72" height="0.7" fill="#9cdcfe"/><rect x="36.45" y="132.55" width="0.57" height="0.7" fill="#cccccc"/><rect x="37.02" y="132.55" width="0.57" height="0.7" fill="#569cd6"/><rect x="37.60" y="132.55" width="8.62" height="0.7" fill="#ce9178"/><rect x="46.22" y="132.55" width="0.57" height="0.7" fill="#ffd700"/><rect x="7.70" y="133.70" width="3.45" height="0.7" fill="#c586c0"/><rect x="11.72" y="133.70" width="0.57" height="0.7" fill="#9cdcfe"/><rect x="7.70" y="134.85" width="10.35" height="0.7" fill="#dcdcaa"/><rect x="18.05" y="134.85" width="0.57" height="0.7" fill="#ffd700"/><rect x="18.62" y="134.85" width="2.30" height="0.7" fill="#ce9178"/><rect x="21.50" y="134.85" width="2.30" height="0.7" fill="#ce9178"/><rect x="24.37" y="134.85" width="2.88" height="0.7" fill="#ce9178"/><rect x="27.82" y="134.85" width="0.57" height="0.7" fill="#ce9178"/><rect x="28.97" y="134.85" width="3.45" height="0.7" fill="#ce9178"/><rect x="32.42" y="134.85" width="1.15" height="0.7" fill="#d7ba7d"/><rect x="34.15" y="134.85" width="2.88" height="0.7" fill="#ce9178"/><rect x="37.60" y="134.85" width="1.15" height="0.7" fill="#ce9178"/><rect x="39.32" y="134.85" width="2.88" height="0.7" fill="#ce9178"/><rect x="42.77" y="134.85" width="1.15" height="0.7" fill="#ce9178"/><rect x="43.92" y="134.85" width="1.15" height="0.7" fill="#d7ba7d"/><rect x="45.65" y="134.85" width="0.57" height="0.7" fill="#ce9178"/><rect x="46.80" y="134.85" width="2.30" height="0.7" fill="#ce9178"/><rect x="49.67" y="134.85" width="2.88" height="0.7" fill="#ce9178"/><rect x="52.55" y="134.85" width="0.57" height="0.7" fill="#cccccc"/><rect x="53.12" y="134.85" width="3.45" height="0.7" fill="#9cdcfe"/><rect x="56.57" y="134.85" width="0.57" height="0.7" fill="#ffd700"/><rect x="7.70" y="136.00" width="1.15" height="0.7" fill="#c586c0"/><rect x="9.42" y="136.00" width="0.57" height="0.7" fill="#9cdcfe"/><rect x="10.57" y="136.00" width="0.57" height="0.7" fill="#9cdcfe"/><rect x="11.72" y="136.00" width="0.57" height="0.7" fill="#9cdcfe"/><rect x="12.87" y="136.00" width="0.57" height="0.7" fill="#9cdcfe"/><rect x="14.02" y="136.00" width="1.15" height="0.7" fill="#9cdcfe"/><rect x="10.00" y="137.15" width="1.15" height="0.7" fill="#c586c0"/><rect x="11.73" y="137.15" width="0.57" height="0.7" fill="#9cdcfe"/><rect x="12.88" y="137.15" width="0.57" height="0.7" fill="#9cdcfe"/><rect x="14.02" y="137.15" width="1.15" height="0.7" fill="#9cdcfe"/><rect x="12.30" y="138.30" width="1.15" height="0.7" fill="#c586c0"/><rect x="14.02" y="138.30" width="0.57" height="0.7" fill="#9cdcfe"/><rect x="15.17" y="138.30" width="0.57" height="0.7" fill="#9cdcfe"/><rect x="16.32" y="138.30" width="0.57" height="0.7" fill="#9cdcfe"/><rect x="17.47" y="138.30" width="0.57" height="0.7" fill="#9cdcfe"/><rect x="18.62" y="138.30" width="0.57" height="0.7" fill="#9cdcfe"/><rect x="19.77" y="138.30" width="1.15" height="0.7" fill="#9cdcfe"/><rect x="14.60" y="139.45" width="4.60" height="0.7" fill="#dcdcaa"/><rect x="19.20" y="139.45" width="0.57" height="0.7" fill="#ffd700"/><rect x="19.77" y="139.45" width="0.57" height="0.7" fill="#569cd6"/><rect x="20.35" y="139.45" width="13.22" height="0.7" fill="#ce9178"/><rect x="33.57" y="139.45" width="0.57" height="0.7" fill="#cccccc"/><rect x="34.72" y="139.45" width="0.57" height="0.7" fill="#569cd6"/><rect x="35.30" y="139.45" width="31.62" height="0.7" fill="#ce9178"/><rect x="14.60" y="140.60" width="4.60" height="0.7" fill="#dcdcaa"/><rect x="19.20" y="140.60" width="0.57" height="0.7" fill="#ffd700"/><rect x="19.77" y="140.60" width="0.57" height="0.7" fill="#569cd6"/><rect x="20.35" y="140.60" width="13.22" height="0.7" fill="#ce9178"/><rect x="33.57" y="140.60" width="0.57" height="0.7" fill="#cccccc"/><rect x="34.72" y="140.60" width="0.57" height="0.7" fill="#569cd6"/><rect x="35.30" y="140.60" width="31.62" height="0.7" fill="#ce9178"/><rect x="66.92" y="140.60" width="0.57" height="0.7" fill="#cccccc"/><rect x="14.60" y="141.75" width="1.15" height="0.7" fill="#c586c0"/><rect x="16.32" y="141.75" width="0.57" height="0.7" fill="#9cdcfe"/><rect x="17.47" y="141.75" width="0.57" height="0.7" fill="#9cdcfe"/><rect x="18.62" y="141.75" width="0.57" height="0.7" fill="#9cdcfe"/><rect x="19.77" y="141.75" width="1.15" height="0.7" fill="#9cdcfe"/><rect x="16.90" y="142.90" width="1.72" height="0.7" fill="#9cdcfe"/><rect x="18.62" y="142.90" width="0.57" height="0.7" fill="#cccccc"/><rect x="19.20" y="142.90" width="2.30" height="0.7" fill="#dcdcaa"/><rect x="21.50" y="142.90" width="0.57" height="0.7" fill="#ffd700"/><rect x="22.07" y="142.90" width="3.45" height="0.7" fill="#9cdcfe"/><rect x="25.52" y="142.90" width="0.57" height="0.7" fill="#ffd700"/><rect x="0.80" y="145.20" width="0.57" height="0.7" fill="#6a9955"/><rect x="1.95" y="145.20" width="13.80" height="0.7" fill="#6a9955"/><rect x="0.80" y="146.35" width="1.72" height="0.7" fill="#569cd6"/><rect x="3.10" y="146.35" width="6.32" height="0.7" fill="#dcdcaa"/><rect x="9.42" y="146.35" width="0.57" height="0.7" fill="#ffd700"/><rect x="10.00" y="146.35" width="2.30" height="0.7" fill="#9cdcfe"/><rect x="12.30" y="146.35" width="0.57" height="0.7" fill="#cccccc"/><rect x="12.87" y="146.35" width="3.45" height="0.7" fill="#9cdcfe"/><rect x="16.32" y="146.35" width="0.57" height="0.7" fill="#ffd700"/><rect x="16.90" y="146.35" width="0.57" height="0.7" fill="#cccccc"/><rect x="3.10" y="147.50" width="4.60" height="0.7" fill="#dcdcaa"/><rect x="7.70" y="147.50" width="0.57" height="0.7" fill="#ffd700"/><rect x="8.27" y="147.50" width="0.57" height="0.7" fill="#569cd6"/><rect x="8.85" y="147.50" width="13.22" height="0.7" fill="#ce9178"/><rect x="22.07" y="147.50" width="0.57" height="0.7" fill="#cccccc"/><rect x="23.22" y="147.50" width="0.57" height="0.7" fill="#569cd6"/><rect x="23.80" y="147.50" width="31.62" height="0.7" fill="#ce9178"/><rect x="55.42" y="147.50" width="0.57" height="0.7" fill="#cccccc"/><rect x="56.57" y="147.50" width="1.72" height="0.7" fill="#b5cea8"/><rect x="3.10" y="148.65" width="1.15" height="0.7" fill="#c586c0"/><rect x="4.82" y="148.65" width="0.57" height="0.7" fill="#9cdcfe"/><rect x="5.97" y="148.65" width="1.15" height="0.7" fill="#9cdcfe"/><rect x="5.40" y="149.80" width="2.88" height="0.7" fill="#c586c0"/><rect x="8.85" y="149.80" width="2.88" height="0.7" fill="#cccccc"/><rect x="7.70" y="150.95" width="5.17" height="0.7" fill="#dcdcaa"/><rect x="12.87" y="150.95" width="0.57" height="0.7" fill="#ffd700"/><rect x="13.45" y="150.95" width="1.15" height="0.7" fill="#b5cea8"/><rect x="14.60" y="150.95" width="0.57" height="0.7" fill="#cccccc"/><rect x="15.75" y="150.95" width="3.45" height="0.7" fill="#9cdcfe"/><rect x="19.20" y="150.95" width="0.57" height="0.7" fill="#ffd700"/><rect x="7.70" y="152.10" width="1.72" height="0.7" fill="#9cdcfe"/><rect x="9.42" y="152.10" width="0.57" height="0.7" fill="#cccccc"/><rect x="10.00" y="152.10" width="2.30" height="0.7" fill="#dcdcaa"/><rect x="12.30" y="152.10" width="0.57" height="0.7" fill="#ffd700"/><rect x="12.87" y="152.10" width="3.45" height="0.7" fill="#9cdcfe"/><rect x="16.32" y="152.10" width="0.57" height="0.7" fill="#ffd700"/><rect x="7.70" y="153.25" width="3.45" height="0.7" fill="#4ec9b0"/><rect x="11.15" y="153.25" width="0.57" height="0.7" fill="#cccccc"/><rect x="11.72" y="153.25" width="4.02" height="0.7" fill="#4ec9b0"/><rect x="15.75" y="153.25" width="0.57" height="0.7" fill="#cccccc"/><rect x="16.32" y="153.25" width="2.30" height="0.7" fill="#dcdcaa"/><rect x="18.62" y="153.25" width="1.15" height="0.7" fill="#ffd700"/><rect x="7.70" y="154.40" width="3.45" height="0.7" fill="#c586c0"/><rect x="11.72" y="154.40" width="0.57" height="0.7" fill="#9cdcfe"/><rect x="7.70" y="155.55" width="1.15" height="0.7" fill="#c586c0"/><rect x="9.42" y="155.55" width="0.57" height="0.7" fill="#9cdcfe"/><rect x="10.57" y="155.55" width="0.57" height="0.7" fill="#9cdcfe"/><rect x="11.72" y="155.55" width="0.57" height="0.7" fill="#9cdcfe"/><rect x="12.87" y="155.55" width="0.57" height="0.7" fill="#9cdcfe"/><rect x="14.02" y="155.55" width="0.57" height="0.7" fill="#9cdcfe"/><rect x="15.17" y="155.55" width="1.15" height="0.7" fill="#9cdcfe"/><rect x="10.00" y="156.70" width="3.45" height="0.7" fill="#4ec9b0"/><rect x="13.45" y="156.70" width="0.57" height="0.7" fill="#cccccc"/><rect x="14.02" y="156.70" width="2.88" height="0.7" fill="#4ec9b0"/><rect x="16.90" y="156.70" width="0.57" height="0.7" fill="#cccccc"/><rect x="17.47" y="156.70" width="2.88" height="0.7" fill="#9cdcfe"/><rect x="20.35" y="156.70" width="0.57" height="0.7" fill="#cccccc"/><rect x="20.92" y="156.70" width="4.02" height="0.7" fill="#dcdcaa"/><rect x="24.95" y="156.70" width="1.15" height="0.7" fill="#ffd700"/><rect x="7.70" y="157.85" width="3.45" height="0.7" fill="#c586c0"/><rect x="11.72" y="157.85" width="0.57" height="0.7" fill="#9cdcfe"/><rect x="7.70" y="159.00" width="1.15" height="0.7" fill="#9cdcfe"/><rect x="9.42" y="159.00" width="0.57" height="0.7" fill="#cccccc"/><rect x="10.57" y="159.00" width="2.30" height="0.7" fill="#4ec9b0"/><rect x="12.87" y="159.00" width="0.57" height="0.7" fill="#cccccc"/><rect x="13.45" y="159.00" width="2.30" height="0.7" fill="#dcdcaa"/><rect x="15.75" y="159.00" width="1.15" height="0.7" fill="#ffd700"/><rect x="7.70" y="160.15" width="2.88" height="0.7" fill="#c586c0"/><rect x="11.15" y="160.15" width="2.88" height="0.7" fill="#cccccc"/><rect x="10.00" y="161.30" width="1.15" height="0.7" fill="#c586c0"/><rect x="11.73" y="161.30" width="1.15" height="0.7" fill="#9cdcfe"/><rect x="13.45" y="161.30" width="1.15" height="0.7" fill="#cccccc"/><rect x="15.18" y="161.30" width="0.57" height="0.7" fill="#9cdcfe"/><rect x="15.75" y="161.30" width="0.57" height="0.7" fill="#cccccc"/><rect x="10.00" y="162.45" width="1.72" height="0.7" fill="#9cdcfe"/><rect x="12.30" y="162.45" width="0.57" height="0.7" fill="#cccccc"/><rect x="13.45" y="162.45" width="5.75" height="0.7" fill="#4ec9b0"/><rect x="19.20" y="162.45" width="0.57" height="0.7" fill="#ffd700"/><rect x="19.77" y="162.45" width="9.77" height="0.7" fill="#dcdcaa"/><rect x="29.55" y="162.45" width="0.57" height="0.7" fill="#da70d6"/><rect x="30.12" y="162.45" width="2.88" height="0.7" fill="#9cdcfe"/><rect x="33.00" y="162.45" width="0.57" height="0.7" fill="#cccccc"/><rect x="34.15" y="162.45" width="2.88" height="0.7" fill="#4fc1ff"/><rect x="37.02" y="162.45" width="0.57" height="0.7" fill="#cccccc"/><rect x="37.60" y="162.45" width="2.88" height="0.7" fill="#b5cea8"/><rect x="10.00" y="163.60" width="5.17" height="0.7" fill="#dcdcaa"/><rect x="15.17" y="163.60" width="0.57" height="0.7" fill="#ffd700"/><rect x="15.75" y="163.60" width="1.15" height="0.7" fill="#b5cea8"/><rect x="16.90" y="163.60" width="0.57" height="0.7" fill="#cccccc"/><rect x="18.05" y="163.60" width="3.45" height="0.7" fill="#9cdcfe"/><rect x="21.50" y="163.60" width="0.57" height="0.7" fill="#ffd700"/><rect x="10.00" y="164.75" width="3.45" height="0.7" fill="#4ec9b0"/><rect x="13.45" y="164.75" width="0.57" height="0.7" fill="#cccccc"/><rect x="14.02" y="164.75" width="2.88" height="0.7" fill="#4ec9b0"/><rect x="16.90" y="164.75" width="0.57" height="0.7" fill="#cccccc"/><rect x="17.47" y="164.75" width="2.88" height="0.7" fill="#9cdcfe"/><rect x="20.35" y="164.75" width="0.57" height="0.7" fill="#cccccc"/><rect x="20.92" y="164.75" width="4.02" height="0.7" fill="#dcdcaa"/><rect x="24.95" y="164.75" width="1.15" height="0.7" fill="#ffd700"/><rect x="10.00" y="165.90" width="4.60" height="0.7" fill="#dcdcaa"/><rect x="14.60" y="165.90" width="0.57" height="0.7" fill="#ffd700"/><rect x="15.17" y="165.90" width="0.57" height="0.7" fill="#569cd6"/><rect x="15.75" y="165.90" width="13.22" height="0.7" fill="#ce9178"/><rect x="10.00" y="167.05" width="1.15" height="0.7" fill="#c586c0"/><rect x="11.73" y="167.05" width="0.57" height="0.7" fill="#9cdcfe"/><rect x="12.88" y="167.05" width="0.57" height="0.7" fill="#9cdcfe"/><rect x="14.02" y="167.05" width="0.57" height="0.7" fill="#9cdcfe"/><rect x="15.17" y="167.05" width="1.15" height="0.7" fill="#9cdcfe"/><rect x="12.30" y="168.20" width="1.72" height="0.7" fill="#9cdcfe"/><rect x="14.02" y="168.20" width="0.57" height="0.7" fill="#cccccc"/><rect x="14.60" y="168.20" width="2.30" height="0.7" fill="#dcdcaa"/><rect x="16.90" y="168.20" width="1.15" height="0.7" fill="#ffd700"/><rect x="12.30" y="169.35" width="1.72" height="0.7" fill="#9cdcfe"/><rect x="14.02" y="169.35" width="0.57" height="0.7" fill="#cccccc"/><rect x="14.60" y="169.35" width="2.30" height="0.7" fill="#dcdcaa"/><rect x="16.90" y="169.35" width="1.15" height="0.7" fill="#ffd700"/><rect x="12.30" y="170.50" width="5.17" height="0.7" fill="#dcdcaa"/><rect x="17.47" y="170.50" width="0.57" height="0.7" fill="#ffd700"/><rect x="18.05" y="170.50" width="1.15" height="0.7" fill="#b5cea8"/><rect x="19.20" y="170.50" width="0.57" height="0.7" fill="#cccccc"/><rect x="20.35" y="170.50" width="3.45" height="0.7" fill="#9cdcfe"/><rect x="23.80" y="170.50" width="0.57" height="0.7" fill="#ffd700"/><rect x="12.30" y="171.65" width="1.72" height="0.7" fill="#9cdcfe"/><rect x="14.60" y="171.65" width="0.57" height="0.7" fill="#cccccc"/><rect x="15.75" y="171.65" width="3.45" height="0.7" fill="#4ec9b0"/><rect x="19.20" y="171.65" width="0.57" height="0.7" fill="#ffd700"/><rect x="19.77" y="171.65" width="2.88" height="0.7" fill="#4fc1ff"/><rect x="22.65" y="171.65" width="1.15" height="0.7" fill="#cccccc"/><rect x="23.80" y="171.65" width="1.15" height="0.7" fill="#b5cea8"/><rect x="24.95" y="171.65" width="0.57" height="0.7" fill="#cccccc"/><rect x="26.10" y="171.65" width="3.45" height="0.7" fill="#4fc1ff"/><rect x="29.55" y="171.65" width="1.15" height="0.7" fill="#cccccc"/><rect x="30.70" y="171.65" width="1.72" height="0.7" fill="#b5cea8"/><rect x="32.42" y="171.65" width="0.57" height="0.7" fill="#cccccc"/><rect x="33.57" y="171.65" width="0.57" height="0.7" fill="#9cdcfe"/><rect x="34.15" y="171.65" width="0.57" height="0.7" fill="#cccccc"/><rect x="34.72" y="171.65" width="1.15" height="0.7" fill="#b5cea8"/><rect x="35.87" y="171.65" width="0.57" height="0.7" fill="#cccccc"/><rect x="37.02" y="171.65" width="1.15" height="0.7" fill="#b5cea8"/><rect x="38.17" y="171.65" width="0.57" height="0.7" fill="#cccccc"/><rect x="39.32" y="171.65" width="1.72" height="0.7" fill="#9cdcfe"/><rect x="41.05" y="171.65" width="0.57" height="0.7" fill="#cccccc"/><rect x="41.62" y="171.65" width="0.57" height="0.7" fill="#569cd6"/><rect x="42.20" y="171.65" width="8.62" height="0.7" fill="#ce9178"/><rect x="50.82" y="171.65" width="0.57" height="0.7" fill="#ffd700"/><rect x="12.30" y="172.80" width="1.15" height="0.7" fill="#c586c0"/><rect x="14.02" y="172.80" width="0.57" height="0.7" fill="#9cdcfe"/><rect x="15.17" y="172.80" width="1.15" height="0.7" fill="#9cdcfe"/><rect x="0.80" y="175.10" width="1.72" height="0.7" fill="#569cd6"/><rect x="3.10" y="175.10" width="6.32" height="0.7" fill="#dcdcaa"/><rect x="9.42" y="175.10" width="0.57" height="0.7" fill="#ffd700"/><rect x="10.00" y="175.10" width="2.30" height="0.7" fill="#9cdcfe"/><rect x="12.30" y="175.10" width="0.57" height="0.7" fill="#cccccc"/><rect x="12.87" y="175.10" width="3.45" height="0.7" fill="#9cdcfe"/><rect x="16.32" y="175.10" width="0.57" height="0.7" fill="#ffd700"/><rect x="16.90" y="175.10" width="0.57" height="0.7" fill="#cccccc"/><rect x="3.10" y="176.25" width="1.15" height="0.7" fill="#c586c0"/><rect x="4.82" y="176.25" width="0.57" height="0.7" fill="#9cdcfe"/><rect x="5.97" y="176.25" width="0.57" height="0.7" fill="#9cdcfe"/><rect x="7.12" y="176.25" width="0.57" height="0.7" fill="#9cdcfe"/><rect x="8.27" y="176.25" width="1.15" height="0.7" fill="#9cdcfe"/><rect x="5.40" y="177.40" width="1.72" height="0.7" fill="#9cdcfe"/><rect x="7.70" y="177.40" width="0.57" height="0.7" fill="#cccccc"/><rect x="8.85" y="177.40" width="3.45" height="0.7" fill="#4ec9b0"/><rect x="12.30" y="177.40" width="0.57" height="0.7" fill="#ffd700"/><rect x="12.87" y="177.40" width="2.88" height="0.7" fill="#4fc1ff"/><rect x="15.75" y="177.40" width="1.15" height="0.7" fill="#cccccc"/><rect x="16.90" y="177.40" width="1.15" height="0.7" fill="#b5cea8"/><rect x="18.05" y="177.40" width="0.57" height="0.7" fill="#cccccc"/><rect x="19.20" y="177.40" width="3.45" height="0.7" fill="#4fc1ff"/><rect x="22.65" y="177.40" width="1.15" height="0.7" fill="#cccccc"/><rect x="23.80" y="177.40" width="1.72" height="0.7" fill="#b5cea8"/><rect x="25.52" y="177.40" width="0.57" height="0.7" fill="#cccccc"/><rect x="26.67" y="177.40" width="0.57" height="0.7" fill="#9cdcfe"/><rect x="27.25" y="177.40" width="0.57" height="0.7" fill="#cccccc"/><rect x="27.82" y="177.40" width="1.15" height="0.7" fill="#b5cea8"/><rect x="28.97" y="177.40" width="0.57" height="0.7" fill="#cccccc"/><rect x="30.12" y="177.40" width="1.15" height="0.7" fill="#b5cea8"/><rect x="31.27" y="177.40" width="0.57" height="0.7" fill="#cccccc"/><rect x="32.42" y="177.40" width="1.72" height="0.7" fill="#9cdcfe"/><rect x="34.15" y="177.40" width="0.57" height="0.7" fill="#cccccc"/><rect x="34.72" y="177.40" width="0.57" height="0.7" fill="#569cd6"/><rect x="35.30" y="177.40" width="8.62" height="0.7" fill="#ce9178"/><rect x="43.92" y="177.40" width="0.57" height="0.7" fill="#ffd700"/><rect x="5.40" y="178.55" width="1.15" height="0.7" fill="#c586c0"/><rect x="7.12" y="178.55" width="1.15" height="0.7" fill="#9cdcfe"/><rect x="8.85" y="178.55" width="1.15" height="0.7" fill="#cccccc"/><rect x="10.58" y="178.55" width="0.57" height="0.7" fill="#9cdcfe"/><rect x="11.15" y="178.55" width="0.57" height="0.7" fill="#cccccc"/><rect x="5.40" y="179.70" width="1.15" height="0.7" fill="#c586c0"/><rect x="7.12" y="179.70" width="0.57" height="0.7" fill="#9cdcfe"/><rect x="8.27" y="179.70" width="0.57" height="0.7" fill="#9cdcfe"/><rect x="9.42" y="179.70" width="0.57" height="0.7" fill="#9cdcfe"/><rect x="10.57" y="179.70" width="0.57" height="0.7" fill="#9cdcfe"/><rect x="11.72" y="179.70" width="0.57" height="0.7" fill="#9cdcfe"/><rect x="12.87" y="179.70" width="1.15" height="0.7" fill="#9cdcfe"/><rect x="7.70" y="180.85" width="0.57" height="0.7" fill="#9cdcfe"/><rect x="8.27" y="180.85" width="0.57" height="0.7" fill="#cccccc"/><rect x="8.85" y="180.85" width="1.72" height="0.7" fill="#b5cea8"/><rect x="10.57" y="180.85" width="0.57" height="0.7" fill="#cccccc"/><rect x="11.15" y="180.85" width="1.72" height="0.7" fill="#b5cea8"/><rect x="7.70" y="182.00" width="1.15" height="0.7" fill="#9cdcfe"/><rect x="9.42" y="182.00" width="0.57" height="0.7" fill="#cccccc"/><rect x="10.57" y="182.00" width="2.30" height="0.7" fill="#4ec9b0"/><rect x="12.87" y="182.00" width="0.57" height="0.7" fill="#cccccc"/><rect x="13.45" y="182.00" width="2.30" height="0.7" fill="#dcdcaa"/><rect x="15.75" y="182.00" width="1.15" height="0.7" fill="#ffd700"/><rect x="16.90" y="182.00" width="0.57" height="0.7" fill="#cccccc"/><rect x="17.47" y="182.00" width="1.15" height="0.7" fill="#9cdcfe"/><rect x="7.70" y="183.15" width="2.88" height="0.7" fill="#c586c0"/><rect x="11.15" y="183.15" width="2.88" height="0.7" fill="#cccccc"/><rect x="10.00" y="184.30" width="3.45" height="0.7" fill="#4ec9b0"/><rect x="13.45" y="184.30" width="0.57" height="0.7" fill="#cccccc"/><rect x="14.02" y="184.30" width="2.88" height="0.7" fill="#4ec9b0"/><rect x="16.90" y="184.30" width="0.57" height="0.7" fill="#cccccc"/><rect x="17.47" y="184.30" width="2.88" height="0.7" fill="#9cdcfe"/><rect x="20.35" y="184.30" width="0.57" height="0.7" fill="#cccccc"/><rect x="20.92" y="184.30" width="4.02" height="0.7" fill="#dcdcaa"/><rect x="24.95" y="184.30" width="1.15" height="0.7" fill="#ffd700"/><rect x="10.00" y="185.45" width="1.72" height="0.7" fill="#9cdcfe"/><rect x="11.72" y="185.45" width="0.57" height="0.7" fill="#cccccc"/><rect x="12.30" y="185.45" width="2.30" height="0.7" fill="#dcdcaa"/><rect x="14.60" y="185.45" width="1.15" height="0.7" fill="#ffd700"/><rect x="10.00" y="186.60" width="4.60" height="0.7" fill="#dcdcaa"/><rect x="14.60" y="186.60" width="0.57" height="0.7" fill="#ffd700"/><rect x="15.17" y="186.60" width="0.57" height="0.7" fill="#569cd6"/><rect x="15.75" y="186.60" width="13.22" height="0.7" fill="#ce9178"/><rect x="28.97" y="186.60" width="0.57" height="0.7" fill="#cccccc"/><rect x="30.12" y="186.60" width="0.57" height="0.7" fill="#569cd6"/><rect x="30.70" y="186.60" width="31.62" height="0.7" fill="#ce9178"/><rect x="62.32" y="186.60" width="0.57" height="0.7" fill="#cccccc"/><rect x="63.47" y="186.60" width="1.72" height="0.7" fill="#b5cea8"/><rect x="10.00" y="187.75" width="10.35" height="0.7" fill="#dcdcaa"/><rect x="20.35" y="187.75" width="0.57" height="0.7" fill="#ffd700"/><rect x="20.92" y="187.75" width="2.30" height="0.7" fill="#ce9178"/><rect x="23.80" y="187.75" width="2.30" height="0.7" fill="#ce9178"/><rect x="26.67" y="187.75" width="2.88" height="0.7" fill="#ce9178"/><rect x="30.12" y="187.75" width="0.57" height="0.7" fill="#ce9178"/><rect x="31.27" y="187.75" width="3.45" height="0.7" fill="#ce9178"/><rect x="0.80" y="190.05" width="1.72" height="0.7" fill="#569cd6"/><rect x="3.10" y="190.05" width="4.60" height="0.7" fill="#dcdcaa"/><rect x="7.70" y="190.05" width="0.57" height="0.7" fill="#ffd700"/><rect x="8.27" y="190.05" width="2.88" height="0.7" fill="#9cdcfe"/><rect x="11.15" y="190.05" width="0.57" height="0.7" fill="#cccccc"/><rect x="12.30" y="190.05" width="1.72" height="0.7" fill="#9cdcfe"/><rect x="14.02" y="190.05" width="0.57" height="0.7" fill="#cccccc"/><rect x="14.60" y="190.05" width="0.57" height="0.7" fill="#9cdcfe"/><rect x="15.17" y="190.05" width="0.57" height="0.7" fill="#cccccc"/><rect x="15.75" y="190.05" width="3.45" height="0.7" fill="#9cdcfe"/><rect x="19.20" y="190.05" width="0.57" height="0.7" fill="#ffd700"/><rect x="19.77" y="190.05" width="0.57" height="0.7" fill="#cccccc"/><rect x="3.10" y="191.20" width="1.72" height="0.7" fill="#9cdcfe"/><rect x="5.40" y="191.20" width="0.57" height="0.7" fill="#cccccc"/><rect x="6.55" y="191.20" width="5.75" height="0.7" fill="#4ec9b0"/><rect x="12.30" y="191.20" width="0.57" height="0.7" fill="#ffd700"/><rect x="12.87" y="191.20" width="9.77" height="0.7" fill="#dcdcaa"/><rect x="22.65" y="191.20" width="0.57" height="0.7" fill="#da70d6"/><rect x="23.22" y="191.20" width="2.88" height="0.7" fill="#9cdcfe"/><rect x="26.10" y="191.20" width="0.57" height="0.7" fill="#cccccc"/><rect x="27.25" y="191.20" width="2.88" height="0.7" fill="#4fc1ff"/><rect x="30.12" y="191.20" width="0.57" height="0.7" fill="#cccccc"/><rect x="30.70" y="191.20" width="2.88" height="0.7" fill="#b5cea8"/><rect x="33.57" y="191.20" width="0.57" height="0.7" fill="#cccccc"/><rect x="34.72" y="191.20" width="3.45" height="0.7" fill="#4fc1ff"/><rect x="38.17" y="191.20" width="0.57" height="0.7" fill="#da70d6"/><rect x="38.75" y="191.20" width="0.57" height="0.7" fill="#cccccc"/><rect x="39.90" y="191.20" width="2.88" height="0.7" fill="#4fc1ff"/><rect x="42.77" y="191.20" width="1.15" height="0.7" fill="#cccccc"/><rect x="43.92" y="191.20" width="0.57" height="0.7" fill="#b5cea8"/><rect x="44.50" y="191.20" width="0.57" height="0.7" fill="#cccccc"/><rect x="45.65" y="191.20" width="3.45" height="0.7" fill="#4fc1ff"/><rect x="49.10" y="191.20" width="0.57" height="0.7" fill="#ffd700"/><rect x="3.10" y="192.35" width="1.72" height="0.7" fill="#9cdcfe"/><rect x="4.82" y="192.35" width="0.57" height="0.7" fill="#cccccc"/><rect x="5.40" y="192.35" width="2.30" height="0.7" fill="#dcdcaa"/><rect x="7.70" y="192.35" width="0.57" height="0.7" fill="#ffd700"/><rect x="8.27" y="192.35" width="3.45" height="0.7" fill="#9cdcfe"/><rect x="11.72" y="192.35" width="0.57" height="0.7" fill="#ffd700"/><rect x="3.10" y="193.50" width="1.15" height="0.7" fill="#c586c0"/><rect x="4.82" y="193.50" width="0.57" height="0.7" fill="#9cdcfe"/><rect x="5.97" y="193.50" width="0.57" height="0.7" fill="#9cdcfe"/><rect x="7.12" y="193.50" width="1.15" height="0.7" fill="#9cdcfe"/><rect x="5.40" y="194.65" width="3.45" height="0.7" fill="#4ec9b0"/><rect x="8.85" y="194.65" width="0.57" height="0.7" fill="#cccccc"/><rect x="9.42" y="194.65" width="4.02" height="0.7" fill="#4ec9b0"/><rect x="13.45" y="194.65" width="0.57" height="0.7" fill="#cccccc"/><rect x="14.02" y="194.65" width="2.30" height="0.7" fill="#dcdcaa"/><rect x="16.32" y="194.65" width="1.15" height="0.7" fill="#ffd700"/><rect x="5.40" y="195.80" width="1.15" height="0.7" fill="#c586c0"/><rect x="7.12" y="195.80" width="0.57" height="0.7" fill="#9cdcfe"/><rect x="8.27" y="195.80" width="0.57" height="0.7" fill="#9cdcfe"/><rect x="9.42" y="195.80" width="0.57" height="0.7" fill="#9cdcfe"/><rect x="10.57" y="195.80" width="0.57" height="0.7" fill="#9cdcfe"/><rect x="11.72" y="195.80" width="1.15" height="0.7" fill="#9cdcfe"/><rect x="5.40" y="196.95" width="3.45" height="0.7" fill="#4ec9b0"/><rect x="8.85" y="196.95" width="0.57" height="0.7" fill="#cccccc"/><rect x="9.42" y="196.95" width="4.02" height="0.7" fill="#4ec9b0"/><rect x="13.45" y="196.95" width="0.57" height="0.7" fill="#cccccc"/><rect x="14.02" y="196.95" width="2.30" height="0.7" fill="#dcdcaa"/><rect x="16.32" y="196.95" width="1.15" height="0.7" fill="#ffd700"/><rect x="5.40" y="198.10" width="4.60" height="0.7" fill="#dcdcaa"/><rect x="10.00" y="198.10" width="0.57" height="0.7" fill="#ffd700"/><rect x="10.57" y="198.10" width="0.57" height="0.7" fill="#569cd6"/><rect x="11.15" y="198.10" width="13.22" height="0.7" fill="#ce9178"/><rect x="24.37" y="198.10" width="0.57" height="0.7" fill="#cccccc"/><rect x="25.52" y="198.10" width="0.57" height="0.7" fill="#569cd6"/><rect x="26.10" y="198.10" width="31.62" height="0.7" fill="#ce9178"/><rect x="57.72" y="198.10" width="0.57" height="0.7" fill="#cccccc"/><rect x="58.87" y="198.10" width="1.72" height="0.7" fill="#b5cea8"/><rect x="5.40" y="199.25" width="2.88" height="0.7" fill="#9cdcfe"/><rect x="8.85" y="199.25" width="0.57" height="0.7" fill="#cccccc"/><rect x="10.00" y="199.25" width="5.75" height="0.7" fill="#4ec9b0"/><rect x="15.75" y="199.25" width="0.57" height="0.7" fill="#ffd700"/><rect x="16.32" y="199.25" width="9.77" height="0.7" fill="#dcdcaa"/><rect x="26.10" y="199.25" width="0.57" height="0.7" fill="#da70d6"/><rect x="26.67" y="199.25" width="0.57" height="0.7" fill="#569cd6"/><rect x="27.25" y="199.25" width="9.77" height="0.7" fill="#ce9178"/><rect x="37.02" y="199.25" width="0.57" height="0.7" fill="#cccccc"/><rect x="38.17" y="199.25" width="1.72" height="0.7" fill="#b5cea8"/><rect x="39.90" y="199.25" width="0.57" height="0.7" fill="#cccccc"/><rect x="41.05" y="199.25" width="1.72" height="0.7" fill="#b5cea8"/><rect x="42.77" y="199.25" width="0.57" height="0.7" fill="#da70d6"/><rect x="43.35" y="199.25" width="0.57" height="0.7" fill="#cccccc"/><rect x="44.50" y="199.25" width="2.88" height="0.7" fill="#4fc1ff"/><rect x="47.37" y="199.25" width="1.15" height="0.7" fill="#cccccc"/><rect x="48.52" y="199.25" width="0.57" height="0.7" fill="#b5cea8"/><rect x="49.10" y="199.25" width="0.57" height="0.7" fill="#cccccc"/><rect x="50.25" y="199.25" width="3.45" height="0.7" fill="#4fc1ff"/><rect x="53.70" y="199.25" width="1.15" height="0.7" fill="#cccccc"/><rect x="54.85" y="199.25" width="1.72" height="0.7" fill="#b5cea8"/><rect x="56.57" y="199.25" width="0.57" height="0.7" fill="#ffd700"/><rect x="5.40" y="200.40" width="2.88" height="0.7" fill="#c586c0"/><rect x="8.85" y="200.40" width="2.88" height="0.7" fill="#cccccc"/><rect x="7.70" y="201.55" width="2.88" height="0.7" fill="#c586c0"/><rect x="11.15" y="201.55" width="2.88" height="0.7" fill="#cccccc"/><rect x="10.00" y="202.70" width="3.45" height="0.7" fill="#4ec9b0"/><rect x="13.45" y="202.70" width="0.57" height="0.7" fill="#cccccc"/><rect x="14.02" y="202.70" width="2.88" height="0.7" fill="#4ec9b0"/><rect x="16.90" y="202.70" width="0.57" height="0.7" fill="#cccccc"/><rect x="17.47" y="202.70" width="2.88" height="0.7" fill="#9cdcfe"/><rect x="20.35" y="202.70" width="0.57" height="0.7" fill="#cccccc"/><rect x="20.92" y="202.70" width="4.02" height="0.7" fill="#dcdcaa"/><rect x="10.00" y="203.85" width="2.88" height="0.7" fill="#c586c0"/><rect x="13.45" y="203.85" width="2.30" height="0.7" fill="#569cd6"/><rect x="15.75" y="203.85" width="0.57" height="0.7" fill="#cccccc"/><rect x="10.00" y="205.00" width="1.72" height="0.7" fill="#9cdcfe"/><rect x="11.72" y="205.00" width="0.57" height="0.7" fill="#cccccc"/><rect x="12.30" y="205.00" width="2.30" height="0.7" fill="#dcdcaa"/><rect x="14.60" y="205.00" width="1.15" height="0.7" fill="#ffd700"/><rect x="10.00" y="206.15" width="3.45" height="0.7" fill="#c586c0"/><rect x="14.02" y="206.15" width="0.57" height="0.7" fill="#9cdcfe"/><rect x="10.00" y="207.30" width="0.57" height="0.7" fill="#9cdcfe"/><rect x="10.57" y="207.30" width="0.57" height="0.7" fill="#cccccc"/><rect x="11.15" y="207.30" width="1.72" height="0.7" fill="#b5cea8"/><rect x="12.87" y="207.30" width="0.57" height="0.7" fill="#cccccc"/><rect x="13.45" y="207.30" width="1.72" height="0.7" fill="#b5cea8"/><rect x="10.00" y="208.45" width="1.15" height="0.7" fill="#c586c0"/><rect x="11.73" y="208.45" width="0.57" height="0.7" fill="#9cdcfe"/><rect x="12.88" y="208.45" width="0.57" height="0.7" fill="#9cdcfe"/><rect x="14.02" y="208.45" width="1.15" height="0.7" fill="#9cdcfe"/><rect x="12.30" y="209.60" width="4.60" height="0.7" fill="#dcdcaa"/><rect x="16.90" y="209.60" width="0.57" height="0.7" fill="#ffd700"/><rect x="17.47" y="209.60" width="0.57" height="0.7" fill="#569cd6"/><rect x="18.05" y="209.60" width="13.22" height="0.7" fill="#ce9178"/><rect x="31.27" y="209.60" width="0.57" height="0.7" fill="#cccccc"/><rect x="32.42" y="209.60" width="0.57" height="0.7" fill="#569cd6"/><rect x="33.00" y="209.60" width="31.62" height="0.7" fill="#ce9178"/><rect x="64.62" y="209.60" width="0.57" height="0.7" fill="#cccccc"/><rect x="65.77" y="209.60" width="1.72" height="0.7" fill="#b5cea8"/><rect x="12.30" y="210.75" width="1.72" height="0.7" fill="#9cdcfe"/><rect x="14.60" y="210.75" width="0.57" height="0.7" fill="#cccccc"/><rect x="15.75" y="210.75" width="3.45" height="0.7" fill="#4ec9b0"/><rect x="19.20" y="210.75" width="0.57" height="0.7" fill="#ffd700"/><rect x="19.77" y="210.75" width="2.88" height="0.7" fill="#4fc1ff"/><rect x="22.65" y="210.75" width="1.15" height="0.7" fill="#cccccc"/><rect x="23.80" y="210.75" width="1.15" height="0.7" fill="#b5cea8"/><rect x="24.95" y="210.75" width="0.57" height="0.7" fill="#cccccc"/><rect x="26.10" y="210.75" width="3.45" height="0.7" fill="#4fc1ff"/><rect x="29.55" y="210.75" width="1.15" height="0.7" fill="#cccccc"/><rect x="30.70" y="210.75" width="1.72" height="0.7" fill="#b5cea8"/><rect x="32.42" y="210.75" width="0.57" height="0.7" fill="#cccccc"/><rect x="33.57" y="210.75" width="0.57" height="0.7" fill="#9cdcfe"/><rect x="34.15" y="210.75" width="0.57" height="0.7" fill="#cccccc"/><rect x="34.72" y="210.75" width="1.15" height="0.7" fill="#b5cea8"/><rect x="35.87" y="210.75" width="0.57" height="0.7" fill="#cccccc"/><rect x="37.02" y="210.75" width="1.15" height="0.7" fill="#b5cea8"/><rect x="38.17" y="210.75" width="0.57" height="0.7" fill="#cccccc"/><rect x="39.32" y="210.75" width="1.72" height="0.7" fill="#9cdcfe"/><rect x="41.05" y="210.75" width="0.57" height="0.7" fill="#cccccc"/><rect x="41.62" y="210.75" width="0.57" height="0.7" fill="#569cd6"/><rect x="42.20" y="210.75" width="8.62" height="0.7" fill="#ce9178"/><rect x="50.82" y="210.75" width="0.57" height="0.7" fill="#ffd700"/><rect x="12.30" y="211.90" width="2.88" height="0.7" fill="#c586c0"/><rect x="15.75" y="211.90" width="2.88" height="0.7" fill="#cccccc"/><rect x="14.60" y="213.05" width="1.72" height="0.7" fill="#9cdcfe"/><rect x="16.90" y="213.05" width="0.57" height="0.7" fill="#cccccc"/><rect x="18.05" y="213.05" width="3.45" height="0.7" fill="#4ec9b0"/><rect x="21.50" y="213.05" width="0.57" height="0.7" fill="#ffd700"/><rect x="22.07" y="213.05" width="2.88" height="0.7" fill="#4fc1ff"/><rect x="24.95" y="213.05" width="1.15" height="0.7" fill="#cccccc"/><rect x="26.10" y="213.05" width="1.15" height="0.7" fill="#b5cea8"/><rect x="27.25" y="213.05" width="0.57" height="0.7" fill="#cccccc"/><rect x="28.40" y="213.05" width="3.45" height="0.7" fill="#4fc1ff"/><rect x="14.60" y="214.20" width="3.45" height="0.7" fill="#4ec9b0"/><rect x="18.05" y="214.20" width="0.57" height="0.7" fill="#cccccc"/><rect x="18.62" y="214.20" width="2.88" height="0.7" fill="#4ec9b0"/><rect x="21.50" y="214.20" width="0.57" height="0.7" fill="#cccccc"/><rect x="22.07" y="214.20" width="2.88" height="0.7" fill="#9cdcfe"/><rect x="24.95" y="214.20" width="0.57" height="0.7" fill="#cccccc"/><rect x="25.52" y="214.20" width="4.02" height="0.7" fill="#dcdcaa"/><rect x="29.55" y="214.20" width="1.15" height="0.7" fill="#ffd700"/><rect x="14.60" y="215.35" width="2.88" height="0.7" fill="#c586c0"/><rect x="18.05" y="215.35" width="2.88" height="0.7" fill="#cccccc"/><rect x="16.90" y="216.50" width="2.88" height="0.7" fill="#9cdcfe"/><rect x="20.35" y="216.50" width="0.57" height="0.7" fill="#cccccc"/><rect x="21.50" y="216.50" width="5.75" height="0.7" fill="#4ec9b0"/><rect x="27.25" y="216.50" width="0.57" height="0.7" fill="#ffd700"/><rect x="27.82" y="216.50" width="9.77" height="0.7" fill="#dcdcaa"/><rect x="16.90" y="217.65" width="2.88" height="0.7" fill="#9cdcfe"/><rect x="20.35" y="217.65" width="0.57" height="0.7" fill="#cccccc"/><rect x="21.50" y="217.65" width="5.75" height="0.7" fill="#4ec9b0"/><rect x="27.25" y="217.65" width="0.57" height="0.7" fill="#ffd700"/><rect x="27.82" y="217.65" width="9.77" height="0.7" fill="#dcdcaa"/><rect x="37.60" y="217.65" width="0.57" height="0.7" fill="#da70d6"/><rect x="38.17" y="217.65" width="0.57" height="0.7" fill="#569cd6"/><rect x="38.75" y="217.65" width="9.77" height="0.7" fill="#ce9178"/><rect x="48.52" y="217.65" width="0.57" height="0.7" fill="#cccccc"/><rect x="49.67" y="217.65" width="1.72" height="0.7" fill="#b5cea8"/><rect x="51.40" y="217.65" width="0.57" height="0.7" fill="#cccccc"/><rect x="52.55" y="217.65" width="1.72" height="0.7" fill="#b5cea8"/><rect x="54.27" y="217.65" width="0.57" height="0.7" fill="#da70d6"/><rect x="54.85" y="217.65" width="0.57" height="0.7" fill="#cccccc"/><rect x="56.00" y="217.65" width="2.88" height="0.7" fill="#4fc1ff"/><rect x="58.87" y="217.65" width="1.15" height="0.7" fill="#cccccc"/><rect x="60.02" y="217.65" width="0.57" height="0.7" fill="#b5cea8"/><rect x="60.60" y="217.65" width="0.57" height="0.7" fill="#cccccc"/><rect x="61.75" y="217.65" width="3.45" height="0.7" fill="#4fc1ff"/><rect x="65.20" y="217.65" width="1.15" height="0.7" fill="#cccccc"/><rect x="66.35" y="217.65" width="1.65" height="0.7" fill="#b5cea8"/><rect x="0.80" y="219.95" width="0.57" height="0.7" fill="#6a9955"/><rect x="1.95" y="219.95" width="17.25" height="0.7" fill="#6a9955"/><rect x="0.80" y="221.10" width="1.72" height="0.7" fill="#569cd6"/><rect x="3.10" y="221.10" width="3.45" height="0.7" fill="#dcdcaa"/><rect x="6.55" y="221.10" width="0.57" height="0.7" fill="#ffd700"/><rect x="7.12" y="221.10" width="2.88" height="0.7" fill="#9cdcfe"/><rect x="10.00" y="221.10" width="0.57" height="0.7" fill="#cccccc"/><rect x="10.57" y="221.10" width="3.45" height="0.7" fill="#9cdcfe"/><rect x="14.02" y="221.10" width="0.57" height="0.7" fill="#ffd700"/><rect x="14.60" y="221.10" width="0.57" height="0.7" fill="#cccccc"/><rect x="3.10" y="222.25" width="1.15" height="0.7" fill="#c586c0"/><rect x="4.82" y="222.25" width="1.15" height="0.7" fill="#9cdcfe"/><rect x="6.55" y="222.25" width="1.15" height="0.7" fill="#cccccc"/><rect x="8.27" y="222.25" width="0.57" height="0.7" fill="#9cdcfe"/><rect x="8.85" y="222.25" width="0.57" height="0.7" fill="#cccccc"/><rect x="3.10" y="223.40" width="2.88" height="0.7" fill="#c586c0"/><rect x="6.55" y="223.40" width="2.88" height="0.7" fill="#cccccc"/><rect x="5.40" y="224.55" width="3.45" height="0.7" fill="#4ec9b0"/><rect x="8.85" y="224.55" width="0.57" height="0.7" fill="#cccccc"/><rect x="9.42" y="224.55" width="2.88" height="0.7" fill="#4ec9b0"/><rect x="12.30" y="224.55" width="0.57" height="0.7" fill="#cccccc"/><rect x="12.87" y="224.55" width="2.88" height="0.7" fill="#9cdcfe"/><rect x="15.75" y="224.55" width="0.57" height="0.7" fill="#cccccc"/><rect x="16.32" y="224.55" width="2.88" height="0.7" fill="#dcdcaa"/><rect x="19.20" y="224.55" width="1.15" height="0.7" fill="#ffd700"/><rect x="5.40" y="225.70" width="1.15" height="0.7" fill="#c586c0"/><rect x="7.12" y="225.70" width="0.57" height="0.7" fill="#9cdcfe"/><rect x="8.27" y="225.70" width="0.57" height="0.7" fill="#9cdcfe"/><rect x="9.42" y="225.70" width="0.57" height="0.7" fill="#9cdcfe"/><rect x="10.57" y="225.70" width="1.15" height="0.7" fill="#9cdcfe"/><rect x="7.70" y="226.85" width="1.15" height="0.7" fill="#c586c0"/><rect x="9.42" y="226.85" width="0.57" height="0.7" fill="#9cdcfe"/><rect x="10.57" y="226.85" width="0.57" height="0.7" fill="#9cdcfe"/><rect x="11.72" y="226.85" width="1.15" height="0.7" fill="#9cdcfe"/><rect x="10.00" y="228.00" width="2.88" height="0.7" fill="#c586c0"/><rect x="13.45" y="228.00" width="2.88" height="0.7" fill="#cccccc"/><rect x="12.30" y="229.15" width="1.72" height="0.7" fill="#9cdcfe"/><rect x="14.02" y="229.15" width="0.57" height="0.7" fill="#cccccc"/><rect x="14.60" y="229.15" width="2.30" height="0.7" fill="#dcdcaa"/><rect x="16.90" y="229.15" width="0.57" height="0.7" fill="#ffd700"/><rect x="17.47" y="229.15" width="3.45" height="0.7" fill="#9cdcfe"/><rect x="20.92" y="229.15" width="0.57" height="0.7" fill="#ffd700"/><rect x="12.30" y="230.30" width="1.15" height="0.7" fill="#c586c0"/><rect x="14.02" y="230.30" width="1.15" height="0.7" fill="#9cdcfe"/><rect x="15.75" y="230.30" width="1.15" height="0.7" fill="#cccccc"/><rect x="17.48" y="230.30" width="0.57" height="0.7" fill="#9cdcfe"/><rect x="18.05" y="230.30" width="0.57" height="0.7" fill="#cccccc"/><rect x="12.30" y="231.45" width="3.45" height="0.7" fill="#c586c0"/><rect x="16.32" y="231.45" width="0.57" height="0.7" fill="#9cdcfe"/><rect x="0.80" y="233.75" width="1.72" height="0.7" fill="#569cd6"/><rect x="3.10" y="233.75" width="3.45" height="0.7" fill="#dcdcaa"/><rect x="6.55" y="233.75" width="0.57" height="0.7" fill="#ffd700"/><rect x="7.12" y="233.75" width="2.88" height="0.7" fill="#9cdcfe"/><rect x="10.00" y="233.75" width="0.57" height="0.7" fill="#cccccc"/><rect x="10.57" y="233.75" width="3.45" height="0.7" fill="#9cdcfe"/><rect x="14.02" y="233.75" width="0.57" height="0.7" fill="#ffd700"/><rect x="14.60" y="233.75" width="0.57" height="0.7" fill="#cccccc"/><rect x="3.10" y="234.90" width="1.15" height="0.7" fill="#9cdcfe"/><rect x="4.82" y="234.90" width="0.57" height="0.7" fill="#cccccc"/><rect x="5.97" y="234.90" width="2.30" height="0.7" fill="#4ec9b0"/><rect x="8.27" y="234.90" width="0.57" height="0.7" fill="#cccccc"/><rect x="8.85" y="234.90" width="2.30" height="0.7" fill="#dcdcaa"/><rect x="11.15" y="234.90" width="1.15" height="0.7" fill="#ffd700"/><rect x="3.10" y="236.05" width="1.72" height="0.7" fill="#9cdcfe"/><rect x="5.40" y="236.05" width="0.57" height="0.7" fill="#cccccc"/><rect x="6.55" y="236.05" width="5.75" height="0.7" fill="#4ec9b0"/><rect x="12.30" y="236.05" width="0.57" height="0.7" fill="#ffd700"/><rect x="12.87" y="236.05" width="9.77" height="0.7" fill="#dcdcaa"/><rect x="0.80" y="238.35" width="0.57" height="0.7" fill="#6a9955"/><rect x="1.95" y="238.35" width="12.65" height="0.7" fill="#6a9955"/><rect x="0.80" y="239.50" width="1.72" height="0.7" fill="#569cd6"/><rect x="3.10" y="239.50" width="3.45" height="0.7" fill="#dcdcaa"/><rect x="6.55" y="239.50" width="0.57" height="0.7" fill="#ffd700"/><rect x="7.12" y="239.50" width="2.88" height="0.7" fill="#9cdcfe"/><rect x="10.00" y="239.50" width="0.57" height="0.7" fill="#cccccc"/><rect x="10.57" y="239.50" width="3.45" height="0.7" fill="#9cdcfe"/><rect x="14.02" y="239.50" width="0.57" height="0.7" fill="#ffd700"/><rect x="14.60" y="239.50" width="0.57" height="0.7" fill="#cccccc"/><rect x="3.10" y="240.65" width="1.72" height="0.7" fill="#9cdcfe"/><rect x="4.82" y="240.65" width="0.57" height="0.7" fill="#cccccc"/><rect x="5.40" y="240.65" width="2.30" height="0.7" fill="#dcdcaa"/><rect x="7.70" y="240.65" width="1.15" height="0.7" fill="#ffd700"/><rect x="3.10" y="241.80" width="4.60" height="0.7" fill="#dcdcaa"/><rect x="7.70" y="241.80" width="0.57" height="0.7" fill="#ffd700"/><rect x="8.27" y="241.80" width="0.57" height="0.7" fill="#569cd6"/><rect x="8.85" y="241.80" width="13.22" height="0.7" fill="#ce9178"/><rect x="22.07" y="241.80" width="0.57" height="0.7" fill="#cccccc"/><rect x="23.22" y="241.80" width="0.57" height="0.7" fill="#569cd6"/><rect x="23.80" y="241.80" width="31.62" height="0.7" fill="#ce9178"/><rect x="55.42" y="241.80" width="0.57" height="0.7" fill="#cccccc"/><rect x="56.57" y="241.80" width="1.72" height="0.7" fill="#b5cea8"/><rect x="3.10" y="242.95" width="3.45" height="0.7" fill="#c586c0"/><rect x="7.12" y="242.95" width="0.57" height="0.7" fill="#9cdcfe"/><rect x="3.10" y="244.10" width="3.45" height="0.7" fill="#c586c0"/><rect x="0.80" y="246.40" width="0.57" height="0.7" fill="#6a9955"/><rect x="1.95" y="246.40" width="18.97" height="0.7" fill="#6a9955"/><rect x="0.80" y="247.55" width="1.72" height="0.7" fill="#569cd6"/><rect x="3.10" y="247.55" width="6.32" height="0.7" fill="#dcdcaa"/><rect x="9.42" y="247.55" width="0.57" height="0.7" fill="#ffd700"/><rect x="10.00" y="247.55" width="2.30" height="0.7" fill="#9cdcfe"/><rect x="12.30" y="247.55" width="0.57" height="0.7" fill="#cccccc"/><rect x="12.87" y="247.55" width="3.45" height="0.7" fill="#9cdcfe"/><rect x="16.32" y="247.55" width="0.57" height="0.7" fill="#ffd700"/><rect x="16.90" y="247.55" width="0.57" height="0.7" fill="#cccccc"/><rect x="0.80" y="249.85" width="1.72" height="0.7" fill="#569cd6"/><rect x="3.10" y="249.85" width="6.32" height="0.7" fill="#dcdcaa"/><rect x="9.42" y="249.85" width="0.57" height="0.7" fill="#ffd700"/><rect x="10.00" y="249.85" width="2.30" height="0.7" fill="#9cdcfe"/><rect x="12.30" y="249.85" width="0.57" height="0.7" fill="#cccccc"/><rect x="12.87" y="249.85" width="3.45" height="0.7" fill="#9cdcfe"/><rect x="16.32" y="249.85" width="0.57" height="0.7" fill="#ffd700"/><rect x="16.90" y="249.85" width="0.57" height="0.7" fill="#cccccc"/><rect x="3.10" y="251.00" width="1.72" height="0.7" fill="#9cdcfe"/><rect x="4.82" y="251.00" width="0.57" height="0.7" fill="#cccccc"/><rect x="5.40" y="251.00" width="2.30" height="0.7" fill="#dcdcaa"/><rect x="7.70" y="251.00" width="0.57" height="0.7" fill="#ffd700"/><rect x="8.27" y="251.00" width="3.45" height="0.7" fill="#9cdcfe"/><rect x="11.72" y="251.00" width="0.57" height="0.7" fill="#ffd700"/><rect x="3.10" y="252.15" width="3.45" height="0.7" fill="#c586c0"/><rect x="3.10" y="253.30" width="1.15" height="0.7" fill="#9cdcfe"/><rect x="4.82" y="253.30" width="0.57" height="0.7" fill="#cccccc"/><rect x="5.97" y="253.30" width="2.30" height="0.7" fill="#4ec9b0"/><rect x="8.27" y="253.30" width="0.57" height="0.7" fill="#cccccc"/><rect x="8.85" y="253.30" width="2.30" height="0.7" fill="#dcdcaa"/><rect x="11.15" y="253.30" width="1.15" height="0.7" fill="#ffd700"/><rect x="3.10" y="254.45" width="1.72" height="0.7" fill="#9cdcfe"/><rect x="4.82" y="254.45" width="0.57" height="0.7" fill="#cccccc"/><rect x="5.40" y="254.45" width="2.30" height="0.7" fill="#dcdcaa"/><rect x="7.70" y="254.45" width="1.15" height="0.7" fill="#ffd700"/><rect x="3.10" y="255.60" width="1.72" height="0.7" fill="#9cdcfe"/><rect x="5.40" y="255.60" width="0.57" height="0.7" fill="#cccccc"/><rect x="6.55" y="255.60" width="3.45" height="0.7" fill="#4ec9b0"/><rect x="10.00" y="255.60" width="0.57" height="0.7" fill="#ffd700"/><rect x="10.57" y="255.60" width="2.88" height="0.7" fill="#4fc1ff"/><rect x="13.45" y="255.60" width="1.15" height="0.7" fill="#cccccc"/><rect x="14.60" y="255.60" width="1.15" height="0.7" fill="#b5cea8"/><rect x="15.75" y="255.60" width="0.57" height="0.7" fill="#cccccc"/><rect x="16.90" y="255.60" width="3.45" height="0.7" fill="#4fc1ff"/><rect x="20.35" y="255.60" width="1.15" height="0.7" fill="#cccccc"/><rect x="21.50" y="255.60" width="1.72" height="0.7" fill="#b5cea8"/><rect x="23.22" y="255.60" width="0.57" height="0.7" fill="#cccccc"/><rect x="24.37" y="255.60" width="0.57" height="0.7" fill="#9cdcfe"/><rect x="24.95" y="255.60" width="0.57" height="0.7" fill="#cccccc"/><rect x="25.52" y="255.60" width="1.15" height="0.7" fill="#b5cea8"/><rect x="26.67" y="255.60" width="0.57" height="0.7" fill="#cccccc"/><rect x="27.82" y="255.60" width="1.15" height="0.7" fill="#b5cea8"/><rect x="28.97" y="255.60" width="0.57" height="0.7" fill="#cccccc"/><rect x="30.12" y="255.60" width="1.72" height="0.7" fill="#9cdcfe"/><rect x="31.85" y="255.60" width="0.57" height="0.7" fill="#cccccc"/><rect x="32.42" y="255.60" width="0.57" height="0.7" fill="#569cd6"/><rect x="33.00" y="255.60" width="8.62" height="0.7" fill="#ce9178"/><rect x="41.62" y="255.60" width="0.57" height="0.7" fill="#ffd700"/><rect x="3.10" y="256.75" width="1.15" height="0.7" fill="#c586c0"/><rect x="4.82" y="256.75" width="0.57" height="0.7" fill="#9cdcfe"/><rect x="5.97" y="256.75" width="0.57" height="0.7" fill="#9cdcfe"/><rect x="7.12" y="256.75" width="0.57" height="0.7" fill="#9cdcfe"/><rect x="8.27" y="256.75" width="0.57" height="0.7" fill="#9cdcfe"/><rect x="9.42" y="256.75" width="1.15" height="0.7" fill="#9cdcfe"/><rect x="5.40" y="257.90" width="1.15" height="0.7" fill="#9cdcfe"/><rect x="7.12" y="257.90" width="0.57" height="0.7" fill="#cccccc"/><rect x="8.27" y="257.90" width="2.30" height="0.7" fill="#4ec9b0"/><rect x="10.57" y="257.90" width="0.57" height="0.7" fill="#cccccc"/><rect x="11.15" y="257.90" width="2.30" height="0.7" fill="#dcdcaa"/><rect x="13.45" y="257.90" width="1.15" height="0.7" fill="#ffd700"/><rect x="14.60" y="257.90" width="0.57" height="0.7" fill="#cccccc"/><rect x="15.17" y="257.90" width="1.15" height="0.7" fill="#9cdcfe"/><rect x="5.40" y="259.05" width="1.72" height="0.7" fill="#9cdcfe"/><rect x="7.70" y="259.05" width="0.57" height="0.7" fill="#cccccc"/><rect x="8.85" y="259.05" width="5.75" height="0.7" fill="#4ec9b0"/><rect x="14.60" y="259.05" width="0.57" height="0.7" fill="#ffd700"/><rect x="15.17" y="259.05" width="9.77" height="0.7" fill="#dcdcaa"/><rect x="24.95" y="259.05" width="0.57" height="0.7" fill="#da70d6"/><rect x="25.52" y="259.05" width="2.88" height="0.7" fill="#9cdcfe"/><rect x="28.40" y="259.05" width="0.57" height="0.7" fill="#cccccc"/><rect x="29.55" y="259.05" width="2.88" height="0.7" fill="#4fc1ff"/><rect x="5.40" y="260.20" width="2.88" height="0.7" fill="#c586c0"/><rect x="8.85" y="260.20" width="2.88" height="0.7" fill="#cccccc"/><rect x="7.70" y="261.35" width="3.45" height="0.7" fill="#4ec9b0"/><rect x="11.15" y="261.35" width="0.57" height="0.7" fill="#cccccc"/><rect x="11.72" y="261.35" width="4.02" height="0.7" fill="#4ec9b0"/><rect x="15.75" y="261.35" width="0.57" height="0.7" fill="#cccccc"/><rect x="16.32" y="261.35" width="2.30" height="0.7" fill="#dcdcaa"/><rect x="18.62" y="261.35" width="1.15" height="0.7" fill="#ffd700"/><rect x="7.70" y="262.50" width="3.45" height="0.7" fill="#c586c0"/><rect x="7.70" y="263.65" width="1.72" height="0.7" fill="#9cdcfe"/><rect x="9.42" y="263.65" width="0.57" height="0.7" fill="#cccccc"/><rect x="10.00" y="263.65" width="2.30" height="0.7" fill="#dcdcaa"/><rect x="12.30" y="263.65" width="0.57" height="0.7" fill="#ffd700"/><rect x="12.87" y="263.65" width="3.45" height="0.7" fill="#9cdcfe"/><rect x="16.32" y="263.65" width="0.57" height="0.7" fill="#ffd700"/><rect x="7.70" y="264.80" width="4.60" height="0.7" fill="#dcdcaa"/><rect x="12.30" y="264.80" width="0.57" height="0.7" fill="#ffd700"/><rect x="12.87" y="264.80" width="0.57" height="0.7" fill="#569cd6"/><rect x="13.45" y="264.80" width="13.22" height="0.7" fill="#ce9178"/><rect x="7.70" y="265.95" width="1.15" height="0.7" fill="#9cdcfe"/><rect x="9.42" y="265.95" width="0.57" height="0.7" fill="#cccccc"/><rect x="10.57" y="265.95" width="2.30" height="0.7" fill="#4ec9b0"/><rect x="12.87" y="265.95" width="0.57" height="0.7" fill="#cccccc"/><rect x="13.45" y="265.95" width="2.30" height="0.7" fill="#dcdcaa"/><rect x="15.75" y="265.95" width="1.15" height="0.7" fill="#ffd700"/><rect x="16.90" y="265.95" width="0.57" height="0.7" fill="#cccccc"/><rect x="17.47" y="265.95" width="1.15" height="0.7" fill="#9cdcfe"/><rect x="7.70" y="267.10" width="2.88" height="0.7" fill="#c586c0"/><rect x="11.15" y="267.10" width="2.88" height="0.7" fill="#cccccc"/><rect x="7.70" y="268.25" width="3.45" height="0.7" fill="#4ec9b0"/><rect x="11.15" y="268.25" width="0.57" height="0.7" fill="#cccccc"/><rect x="11.72" y="268.25" width="2.88" height="0.7" fill="#4ec9b0"/><rect x="14.60" y="268.25" width="0.57" height="0.7" fill="#cccccc"/><rect x="15.17" y="268.25" width="2.88" height="0.7" fill="#9cdcfe"/><rect x="18.05" y="268.25" width="0.57" height="0.7" fill="#cccccc"/><rect x="18.62" y="268.25" width="4.02" height="0.7" fill="#dcdcaa"/><rect x="22.65" y="268.25" width="1.15" height="0.7" fill="#ffd700"/><rect x="7.70" y="269.40" width="1.15" height="0.7" fill="#c586c0"/><rect x="9.42" y="269.40" width="0.57" height="0.7" fill="#9cdcfe"/><rect x="10.57" y="269.40" width="0.57" height="0.7" fill="#9cdcfe"/><rect x="11.72" y="269.40" width="0.57" height="0.7" fill="#9cdcfe"/><rect x="12.87" y="269.40" width="0.57" height="0.7" fill="#9cdcfe"/><rect x="14.02" y="269.40" width="1.15" height="0.7" fill="#9cdcfe"/><rect x="10.00" y="270.55" width="1.15" height="0.7" fill="#c586c0"/><rect x="11.73" y="270.55" width="0.57" height="0.7" fill="#9cdcfe"/><rect x="12.88" y="270.55" width="1.15" height="0.7" fill="#9cdcfe"/><rect x="12.30" y="271.70" width="1.15" height="0.7" fill="#c586c0"/><rect x="14.02" y="271.70" width="0.57" height="0.7" fill="#9cdcfe"/><rect x="15.17" y="271.70" width="0.57" height="0.7" fill="#9cdcfe"/><rect x="16.32" y="271.70" width="0.57" height="0.7" fill="#9cdcfe"/><rect x="17.47" y="271.70" width="0.57" height="0.7" fill="#9cdcfe"/><rect x="18.62" y="271.70" width="1.15" height="0.7" fill="#9cdcfe"/><rect x="14.60" y="272.85" width="2.88" height="0.7" fill="#c586c0"/><rect x="18.05" y="272.85" width="2.88" height="0.7" fill="#cccccc"/><rect x="14.60" y="274.00" width="1.72" height="0.7" fill="#9cdcfe"/><rect x="16.32" y="274.00" width="0.57" height="0.7" fill="#cccccc"/><rect x="16.90" y="274.00" width="2.30" height="0.7" fill="#dcdcaa"/><rect x="19.20" y="274.00" width="1.15" height="0.7" fill="#ffd700"/><rect x="0.80" y="276.30" width="1.72" height="0.7" fill="#569cd6"/><rect x="3.10" y="276.30" width="4.60" height="0.7" fill="#dcdcaa"/><rect x="7.70" y="276.30" width="0.57" height="0.7" fill="#ffd700"/><rect x="8.27" y="276.30" width="2.88" height="0.7" fill="#9cdcfe"/><rect x="11.15" y="276.30" width="0.57" height="0.7" fill="#cccccc"/><rect x="12.30" y="276.30" width="1.72" height="0.7" fill="#9cdcfe"/><rect x="14.02" y="276.30" width="0.57" height="0.7" fill="#cccccc"/><rect x="14.60" y="276.30" width="0.57" height="0.7" fill="#9cdcfe"/><rect x="15.17" y="276.30" width="0.57" height="0.7" fill="#cccccc"/><rect x="15.75" y="276.30" width="3.45" height="0.7" fill="#9cdcfe"/><rect x="19.20" y="276.30" width="0.57" height="0.7" fill="#ffd700"/><rect x="19.77" y="276.30" width="0.57" height="0.7" fill="#cccccc"/><rect x="3.10" y="277.45" width="1.15" height="0.7" fill="#c586c0"/><rect x="4.82" y="277.45" width="0.57" height="0.7" fill="#9cdcfe"/><rect x="5.97" y="277.45" width="0.57" height="0.7" fill="#9cdcfe"/><rect x="7.12" y="277.45" width="0.57" height="0.7" fill="#9cdcfe"/><rect x="8.27" y="277.45" width="0.57" height="0.7" fill="#9cdcfe"/><rect x="9.42" y="277.45" width="0.57" height="0.7" fill="#9cdcfe"/><rect x="10.57" y="277.45" width="1.15" height="0.7" fill="#9cdcfe"/><rect x="5.40" y="278.60" width="1.72" height="0.7" fill="#9cdcfe"/><rect x="7.12" y="278.60" width="0.57" height="0.7" fill="#cccccc"/><rect x="7.70" y="278.60" width="2.30" height="0.7" fill="#dcdcaa"/><rect x="10.00" y="278.60" width="1.15" height="0.7" fill="#ffd700"/><rect x="5.40" y="279.75" width="5.17" height="0.7" fill="#dcdcaa"/><rect x="10.57" y="279.75" width="0.57" height="0.7" fill="#ffd700"/><rect x="11.15" y="279.75" width="1.15" height="0.7" fill="#b5cea8"/><rect x="12.30" y="279.75" width="0.57" height="0.7" fill="#cccccc"/><rect x="13.45" y="279.75" width="3.45" height="0.7" fill="#9cdcfe"/><rect x="16.90" y="279.75" width="0.57" height="0.7" fill="#ffd700"/><rect x="5.40" y="280.90" width="3.45" height="0.7" fill="#4ec9b0"/><rect x="8.85" y="280.90" width="0.57" height="0.7" fill="#cccccc"/><rect x="9.42" y="280.90" width="4.02" height="0.7" fill="#4ec9b0"/><rect x="13.45" y="280.90" width="0.57" height="0.7" fill="#cccccc"/><rect x="14.02" y="280.90" width="2.30" height="0.7" fill="#dcdcaa"/><rect x="16.32" y="280.90" width="1.15" height="0.7" fill="#ffd700"/><rect x="5.40" y="282.05" width="1.72" height="0.7" fill="#9cdcfe"/><rect x="7.70" y="282.05" width="0.57" height="0.7" fill="#cccccc"/><rect x="8.85" y="282.05" width="5.75" height="0.7" fill="#4ec9b0"/><rect x="14.60" y="282.05" width="0.57" height="0.7" fill="#ffd700"/><rect x="15.17" y="282.05" width="9.77" height="0.7" fill="#dcdcaa"/><rect x="24.95" y="282.05" width="0.57" height="0.7" fill="#da70d6"/><rect x="25.52" y="282.05" width="2.88" height="0.7" fill="#9cdcfe"/><rect x="28.40" y="282.05" width="0.57" height="0.7" fill="#cccccc"/><rect x="29.55" y="282.05" width="2.88" height="0.7" fill="#4fc1ff"/><rect x="32.42" y="282.05" width="0.57" height="0.7" fill="#cccccc"/><rect x="33.00" y="282.05" width="2.88" height="0.7" fill="#b5cea8"/><rect x="35.87" y="282.05" width="0.57" height="0.7" fill="#cccccc"/><rect x="37.02" y="282.05" width="3.45" height="0.7" fill="#4fc1ff"/><rect x="40.47" y="282.05" width="0.57" height="0.7" fill="#da70d6"/><rect x="41.05" y="282.05" width="0.57" height="0.7" fill="#cccccc"/><rect x="42.20" y="282.05" width="2.88" height="0.7" fill="#4fc1ff"/><rect x="45.07" y="282.05" width="1.15" height="0.7" fill="#cccccc"/><rect x="46.22" y="282.05" width="0.57" height="0.7" fill="#b5cea8"/><rect x="46.80" y="282.05" width="0.57" height="0.7" fill="#cccccc"/><rect x="47.95" y="282.05" width="3.45" height="0.7" fill="#4fc1ff"/><rect x="51.40" y="282.05" width="0.57" height="0.7" fill="#ffd700"/><rect x="5.40" y="283.20" width="1.72" height="0.7" fill="#9cdcfe"/><rect x="7.12" y="283.20" width="0.57" height="0.7" fill="#cccccc"/><rect x="7.70" y="283.20" width="2.30" height="0.7" fill="#dcdcaa"/><rect x="10.00" y="283.20" width="1.15" height="0.7" fill="#ffd700"/><rect x="0.80" y="285.50" width="0.57" height="0.7" fill="#6a9955"/><rect x="1.95" y="285.50" width="24.72" height="0.7" fill="#6a9955"/><rect x="0.80" y="286.65" width="1.72" height="0.7" fill="#569cd6"/><rect x="3.10" y="286.65" width="6.32" height="0.7" fill="#dcdcaa"/><rect x="9.42" y="286.65" width="0.57" height="0.7" fill="#ffd700"/><rect x="10.00" y="286.65" width="2.30" height="0.7" fill="#9cdcfe"/><rect x="12.30" y="286.65" width="0.57" height="0.7" fill="#cccccc"/><rect x="12.87" y="286.65" width="3.45" height="0.7" fill="#9cdcfe"/><rect x="16.32" y="286.65" width="0.57" height="0.7" fill="#ffd700"/><rect x="16.90" y="286.65" width="0.57" height="0.7" fill="#cccccc"/><rect x="3.10" y="287.80" width="2.88" height="0.7" fill="#c586c0"/><rect x="6.55" y="287.80" width="2.88" height="0.7" fill="#cccccc"/><rect x="5.40" y="288.95" width="4.60" height="0.7" fill="#dcdcaa"/><rect x="10.00" y="288.95" width="0.57" height="0.7" fill="#ffd700"/><rect x="10.57" y="288.95" width="0.57" height="0.7" fill="#569cd6"/><rect x="11.15" y="288.95" width="13.22" height="0.7" fill="#ce9178"/><rect x="24.37" y="288.95" width="0.57" height="0.7" fill="#cccccc"/><rect x="25.52" y="288.95" width="0.57" height="0.7" fill="#569cd6"/><rect x="26.10" y="288.95" width="31.62" height="0.7" fill="#ce9178"/><rect x="57.72" y="288.95" width="0.57" height="0.7" fill="#cccccc"/><rect x="58.87" y="288.95" width="1.72" height="0.7" fill="#b5cea8"/><rect x="5.40" y="290.10" width="1.72" height="0.7" fill="#9cdcfe"/><rect x="7.70" y="290.10" width="0.57" height="0.7" fill="#cccccc"/><rect x="8.85" y="290.10" width="5.75" height="0.7" fill="#4ec9b0"/><rect x="14.60" y="290.10" width="0.57" height="0.7" fill="#ffd700"/><rect x="15.17" y="290.10" width="9.77" height="0.7" fill="#dcdcaa"/><rect x="5.40" y="291.25" width="1.15" height="0.7" fill="#c586c0"/><rect x="7.12" y="291.25" width="0.57" height="0.7" fill="#9cdcfe"/><rect x="8.27" y="291.25" width="0.57" height="0.7" fill="#9cdcfe"/><rect x="9.42" y="291.25" width="0.57" height="0.7" fill="#9cdcfe"/><rect x="10.57" y="291.25" width="1.15" height="0.7" fill="#9cdcfe"/><rect x="7.70" y="292.40" width="1.15" height="0.7" fill="#c586c0"/><rect x="9.42" y="292.40" width="0.57" height="0.7" fill="#9cdcfe"/><rect x="10.57" y="292.40" width="1.15" height="0.7" fill="#9cdcfe"/><rect x="10.00" y="293.55" width="2.88" height="0.7" fill="#c586c0"/><rect x="13.45" y="293.55" width="2.88" height="0.7" fill="#cccccc"/><rect x="12.30" y="294.70" width="1.72" height="0.7" fill="#9cdcfe"/><rect x="14.02" y="294.70" width="0.57" height="0.7" fill="#cccccc"/><rect x="14.60" y="294.70" width="2.30" height="0.7" fill="#dcdcaa"/><rect x="16.90" y="294.70" width="1.15" height="0.7" fill="#ffd700"/><rect x="12.30" y="295.85" width="5.17" height="0.7" fill="#dcdcaa"/><rect x="17.47" y="295.85" width="0.57" height="0.7" fill="#ffd700"/><rect x="18.05" y="295.85" width="1.15" height="0.7" fill="#b5cea8"/><rect x="19.20" y="295.85" width="0.57" height="0.7" fill="#cccccc"/><rect x="20.35" y="295.85" width="3.45" height="0.7" fill="#9cdcfe"/><rect x="23.80" y="295.85" width="0.57" height="0.7" fill="#ffd700"/><rect x="12.30" y="297.00" width="1.72" height="0.7" fill="#9cdcfe"/><rect x="14.60" y="297.00" width="0.57" height="0.7" fill="#cccccc"/><rect x="15.75" y="297.00" width="5.75" height="0.7" fill="#4ec9b0"/><rect x="21.50" y="297.00" width="0.57" height="0.7" fill="#ffd700"/><rect x="22.07" y="297.00" width="9.77" height="0.7" fill="#dcdcaa"/><rect x="31.85" y="297.00" width="0.57" height="0.7" fill="#da70d6"/><rect x="32.42" y="297.00" width="2.88" height="0.7" fill="#9cdcfe"/><rect x="35.30" y="297.00" width="0.57" height="0.7" fill="#cccccc"/><rect x="36.45" y="297.00" width="2.88" height="0.7" fill="#4fc1ff"/><rect x="39.32" y="297.00" width="0.57" height="0.7" fill="#cccccc"/><rect x="39.90" y="297.00" width="2.88" height="0.7" fill="#b5cea8"/><rect x="42.77" y="297.00" width="0.57" height="0.7" fill="#cccccc"/><rect x="43.92" y="297.00" width="3.45" height="0.7" fill="#4fc1ff"/><rect x="12.30" y="298.15" width="3.45" height="0.7" fill="#4ec9b0"/><rect x="15.75" y="298.15" width="0.57" height="0.7" fill="#cccccc"/><rect x="16.32" y="298.15" width="4.02" height="0.7" fill="#4ec9b0"/><rect x="20.35" y="298.15" width="0.57" height="0.7" fill="#cccccc"/><rect x="20.92" y="298.15" width="2.30" height="0.7" fill="#dcdcaa"/><rect x="23.22" y="298.15" width="1.15" height="0.7" fill="#ffd700"/><rect x="12.30" y="299.30" width="1.15" height="0.7" fill="#c586c0"/><rect x="14.02" y="299.30" width="0.57" height="0.7" fill="#9cdcfe"/><rect x="15.17" y="299.30" width="0.57" height="0.7" fill="#9cdcfe"/><rect x="16.32" y="299.30" width="0.57" height="0.7" fill="#9cdcfe"/><rect x="17.47" y="299.30" width="0.57" height="0.7" fill="#9cdcfe"/><rect x="18.62" y="299.30" width="0.57" height="0.7" fill="#9cdcfe"/><rect x="19.77" y="299.30" width="1.15" height="0.7" fill="#9cdcfe"/><rect x="14.60" y="300.45" width="0.57" height="0.7" fill="#9cdcfe"/><rect x="15.17" y="300.45" width="0.57" height="0.7" fill="#cccccc"/><rect x="15.75" y="300.45" width="1.72" height="0.7" fill="#b5cea8"/><rect x="17.47" y="300.45" width="0.57" height="0.7" fill="#cccccc"/><rect x="18.05" y="300.45" width="1.72" height="0.7" fill="#b5cea8"/><rect x="14.60" y="301.60" width="1.15" height="0.7" fill="#c586c0"/><rect x="16.32" y="301.60" width="1.15" height="0.7" fill="#9cdcfe"/><rect x="18.05" y="301.60" width="1.15" height="0.7" fill="#cccccc"/><rect x="19.77" y="301.60" width="0.57" height="0.7" fill="#9cdcfe"/><rect x="20.35" y="301.60" width="0.57" height="0.7" fill="#cccccc"/></svg></div>

<div id="panel">
  <span class="ptab" style="left:11.6px">PROBLEMS</span>
  <span class="ptab" style="left:56px">OUTPUT</span>
  <span class="ptab" style="left:93.7px">DEBUG CONSOLE</span>
  <span class="ptab" style="left:157px;color:#e7e7e7">TERMINAL</span>
  <div class="abs" style="left:155px;top:15px;width:33px;height:1px;background:#0078d4"></div>
  <span class="ptab" style="left:199px">PORTS</span>
  <div class="abs" style="left:11.6px;top:19px;font-family:'Liberation Mono',monospace;font-size:7.2px;line-height:10px;color:#cccccc;white-space:pre;letter-spacing:-0.02px">PS C:\Users\dsingh\OneDrive - The Perse School\python_2024-25&gt;</div>
  <!-- right controls -->
  <svg class="abs" style="left:471px;top:5.5px" width="9" height="9" viewBox="0 0 9 9"><rect x="0.5" y="0.5" width="8" height="8" rx="1.4" fill="none" stroke="#c8c8c8" stroke-width="0.85"/><path d="M2.2 2.4 L4 4 L2.2 5.6 M4.2 6.7 H6.6" stroke="#c8c8c8" stroke-width="0.75" fill="none"/></svg>
  <span class="abs" style="left:483px;top:5.8px;font-size:6.3px;line-height:8px;color:#cccccc">powershell</span>
  <svg class="abs" style="left:518px;top:6px" width="7" height="7" viewBox="0 0 7 7"><path d="M3.5 0 V7 M0 3.5 H7" stroke="#c8c8c8" stroke-width="0.8"/></svg>
  <svg class="abs" style="left:528px;top:8.3px" width="5" height="4" viewBox="0 0 5 4"><path d="M0.4 0.5 L2.5 2.6 L4.6 0.5" stroke="#c8c8c8" stroke-width="0.8" fill="none"/></svg>
  <svg class="abs" style="left:539px;top:5px" width="9" height="9" viewBox="0 0 9 9"><rect x="0.5" y="0.5" width="8" height="8" rx="1" fill="none" stroke="#c8c8c8" stroke-width="0.9"/><path d="M4.5 0.5 V8.5" stroke="#c8c8c8" stroke-width="0.9"/></svg>
  <svg class="abs" style="left:553px;top:4.5px" width="8" height="10" viewBox="0 0 8 10"><path d="M0.5 2 H7.5 M3 2 V0.7 H5 V2 M1.3 2 V9.2 H6.7 V2 M3 4 V7.5 M5 4 V7.5" fill="none" stroke="#c8c8c8" stroke-width="0.9"/></svg>

  <svg class="abs" style="left:582px;top:7px" width="7" height="5" viewBox="0 0 7 5"><path d="M0.6 4 L3.5 1 L6.4 4" stroke="#c8c8c8" stroke-width="0.9" fill="none"/></svg>
  <svg class="abs" style="left:597.3px;top:6.2px" width="6" height="6" viewBox="0 0 6 6"><path d="M0.3 0.3 L5.7 5.7 M5.7 0.3 L0.3 5.7" stroke="#c8c8c8" stroke-width="0.85"/></svg>
  <div class="abs" style="left:605.5px;top:21px;width:0.8px;height:135px;background:#222222"></div>
</div>
<svg class="abs" style="left:174.3px;top:7.7px" width="7.7" height="4" viewBox="0 0 7.7 4"><circle cx="0.80" cy="2" r="0.80" fill="#bbbbbb"/><circle cx="3.85" cy="2" r="0.80" fill="#bbbbbb"/><circle cx="6.90" cy="2" r="0.80" fill="#bbbbbb"/></svg>
<svg class="abs" style="left:198.0px;top:28.0px" width="7.8" height="4" viewBox="0 0 7.8 4"><circle cx="0.90" cy="2" r="0.90" fill="#cccccc"/><circle cx="3.90" cy="2" r="0.90" fill="#cccccc"/><circle cx="6.90" cy="2" r="0.90" fill="#cccccc"/></svg>
<svg class="abs" style="left:810.5px;top:28.0px" width="8.5" height="4" viewBox="0 0 8.5 4"><circle cx="0.90" cy="2" r="0.90" fill="#cccccc"/><circle cx="4.25" cy="2" r="0.90" fill="#cccccc"/><circle cx="7.60" cy="2" r="0.90" fill="#cccccc"/></svg>
<svg class="abs" style="left:781.5px;top:363.4px" width="8.0" height="4" viewBox="0 0 8.0 4"><circle cx="0.90" cy="2" r="0.90" fill="#cccccc"/><circle cx="4.00" cy="2" r="0.90" fill="#cccccc"/><circle cx="7.10" cy="2" r="0.90" fill="#cccccc"/></svg>
<div class="abs" style="left:215px;top:19.5px;width:1px;height:492px;background:#202020"></div>
</div></body></html>
